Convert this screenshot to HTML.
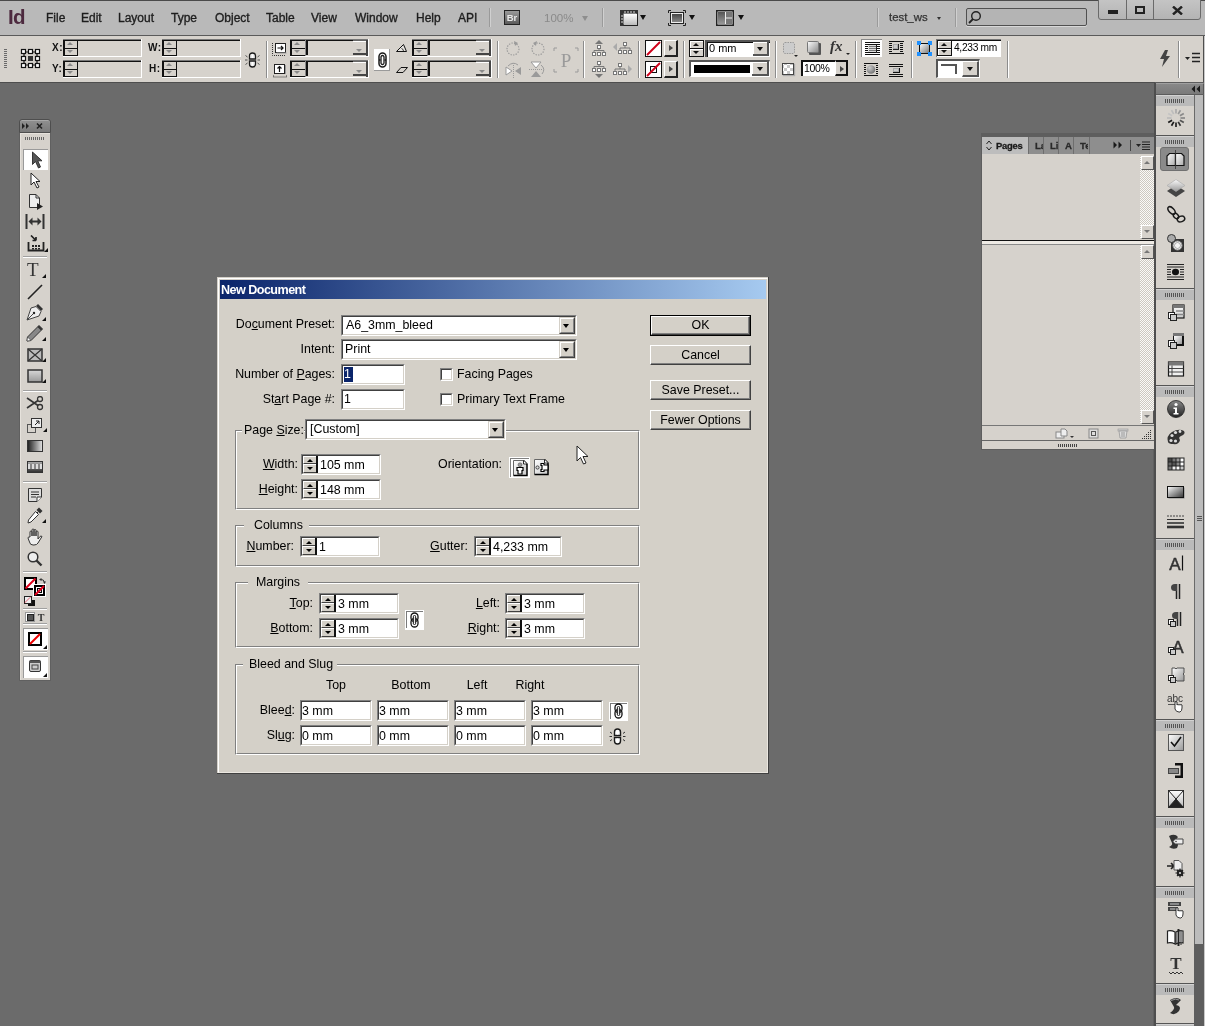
<!DOCTYPE html>
<html><head><meta charset="utf-8">
<style>
*{box-sizing:border-box;margin:0;padding:0}
html,body{width:1205px;height:1026px;overflow:hidden;background:#6b6b6b;font-family:"Liberation Sans",sans-serif;position:relative}
.a{position:absolute}
/* menu bar */
#menubar{left:0;top:0;width:1205px;height:36px;background:#b9b9b9;border-top:1px solid #4a4a4a;border-bottom:1px solid #5a5a5a}
#menubar .m{position:absolute;top:10px;font-size:12px;color:#1e1e1e;letter-spacing:0;-webkit-text-stroke:0.35px #1e1e1e}
#ctrl{left:0;top:36px;width:1204px;height:47px;background:#d6d2cc;border-bottom:1px solid #4e4e4e;border-right:1px solid #4e4e4e}
.fld{position:absolute;border-top:2px solid #111;border-left:2px solid #111;border-right:1px solid #fff;border-bottom:2px solid #fff;background:#d6d2cc}
.spin{position:absolute;border:1px solid #111;border-width:0 2px 0 0;width:15px;height:100%;left:0;top:0}
.lbl{position:absolute;font-size:10px;color:#111;font-weight:bold;letter-spacing:0.5px}
.vsep{position:absolute;width:2px;border-left:1px solid #9a9a9a;border-right:1px solid #fff}
/* toolbox */
#tools{left:20px;top:119px;width:30px;height:561px;background:#d6d2cc;border:1px solid #8a8a8a}
/* dock */
#dock{left:1155px;top:82px;width:50px;height:944px;background:#6b6b6b}
/* dialog */
#dlg{left:217px;top:277px;width:551px;height:496px;background:#d4d0c8;border-top:1px solid #d4d0c8;border-left:1px solid #d4d0c8;border-right:1px solid #404040;border-bottom:1px solid #404040}
#dlg .in{position:absolute;left:0;top:0;right:0;bottom:0;border-top:1px solid #fff;border-left:1px solid #fff;border-right:1px solid #e8e4dc;border-bottom:1px solid #e8e4dc}
#title{left:2px;top:2px;width:545px;height:19px;background:linear-gradient(to right,#0a246a,#a6caf0);color:#fff;font-weight:bold;font-size:11.8px;padding:3px 0 0 2px}
.t{position:absolute;font-size:12.4px;color:#000;white-space:nowrap}
.box{position:absolute;background:#fff;border-top:2px solid #404040;border-left:2px solid #404040;border-right:1px solid #fff;border-bottom:1px solid #fff;box-shadow:inset -1px -1px 0 #d4d0c8, -1px -1px 0 #808080;}
.btn{position:absolute;background:#d4d0c8;border-top:1px solid #fff;border-left:1px solid #fff;border-right:1px solid #404040;border-bottom:1px solid #404040;box-shadow:inset -1px -1px 0 #808080;font-size:12.4px;text-align:center;color:#000}
.grp{position:absolute;border:1px solid #808080;box-shadow:1px 1px 0 #fff inset, 1px 1px 0 #fff}
.gl{position:absolute;background:#d4d0c8;font-size:12.4px;padding:0 3px;white-space:nowrap}
.dd{position:absolute;right:0;top:0;width:17px;height:100%;background:#d4d0c8;border-top:1px solid #d4d0c8;border-left:1px solid #d4d0c8;border-right:1px solid #404040;border-bottom:1px solid #404040;box-shadow:inset 1px 1px 0 #fff, inset -1px -1px 0 #808080}
.dd:after{content:"";position:absolute;left:4px;top:6px;border-left:4px solid transparent;border-right:4px solid transparent;border-top:4px solid #000}
.sp{position:absolute;left:0;top:0;width:16px;height:100%;background:#d4d0c8;border-right:1px solid #404040}
.chk{position:absolute;width:13px;height:13px;background:#fff;border-top:1px solid #808080;border-left:1px solid #808080;border-right:1px solid #fff;border-bottom:1px solid #fff;box-shadow:inset 1px 1px 0 #404040, inset -1px -1px 0 #d4d0c8}
</style></head><body><div id="root" style="position:absolute;left:0;top:0;width:1205px;height:1026px;overflow:hidden;will-change:transform">

<div id="menubar" class="a">
  <div class="a" style="left:8px;top:4px;font-size:20.5px;font-weight:bold;color:#4d2a3f;letter-spacing:-0.6px">Id</div>
  <div class="m" style="left:46px">File</div>
  <div class="m" style="left:81px">Edit</div>
  <div class="m" style="left:118px">Layout</div>
  <div class="m" style="left:171px">Type</div>
  <div class="m" style="left:215px">Object</div>
  <div class="m" style="left:266px">Table</div>
  <div class="m" style="left:311px">View</div>
  <div class="m" style="left:355px">Window</div>
  <div class="m" style="left:416px">Help</div>
  <div class="m" style="left:458px">API</div>
</div>
<div class="a" style="left:489px;top:8px;width:2px;height:19px;background:#9a9a9a;border-right:1px solid #d0d0d0"></div>
<div class="a" style="left:504px;top:10px;width:16px;height:15px;background:linear-gradient(#9a9a9a,#5a5a5a);border:1px solid #222;font-size:9.5px;font-weight:bold;color:#e8e8e8;text-align:center;line-height:13px">Br</div>
<div class="a" style="left:544px;top:12px;font-size:11.5px;color:#8a8a8a">100%</div>
<div class="a" style="left:582px;top:16px;border-left:3.5px solid transparent;border-right:3.5px solid transparent;border-top:5px solid #8e8e8e"></div>
<div class="a" style="left:602px;top:8px;width:2px;height:19px;background:#9a9a9a;border-right:1px solid #d0d0d0"></div>
<svg class="a" style="left:620px;top:10px" width="18" height="16" viewBox="0 0 18 16"><rect x="0.75" y="0.75" width="16.5" height="14.5" fill="#d8d8d8" stroke="#222" stroke-width="1.5"/><rect x="0" y="0" width="18" height="3.5" fill="#333"/><path d="M5 1V3M8 1V3M11 1V3M14 1V3" stroke="#ddd"/><rect x="0" y="0" width="3.5" height="16" fill="#333"/><path d="M1 6H3M1 9H3M1 12H3" stroke="#ddd"/><rect x="4" y="4" width="13" height="11" fill="url(#vgr)"/><defs><linearGradient id="vgr" x1="0" y1="0" x2="0" y2="1"><stop offset="0" stop-color="#fff"/><stop offset="1" stop-color="#bbb"/></linearGradient></defs></svg>
<div class="a" style="left:640px;top:15px;border-left:3.5px solid transparent;border-right:3.5px solid transparent;border-top:5px solid #111"></div>
<svg class="a" style="left:668px;top:10px" width="18" height="16" viewBox="0 0 18 16"><path d="M0.5 3V0.5H3M15 0.5H17.5V3M17.5 13V15.5H15M3 15.5H0.5V13" fill="none" stroke="#222"/><rect x="2.5" y="2.5" width="13" height="11" fill="#eee" stroke="#222"/><rect x="4" y="4" width="10" height="8" fill="url(#sgr)"/><defs><linearGradient id="sgr" x1="0" y1="0" x2="0" y2="1"><stop offset="0" stop-color="#444"/><stop offset="1" stop-color="#888"/></linearGradient></defs></svg>
<div class="a" style="left:689px;top:15px;border-left:3.5px solid transparent;border-right:3.5px solid transparent;border-top:5px solid #111"></div>
<svg class="a" style="left:716px;top:10px" width="18" height="16" viewBox="0 0 18 16"><rect x="0.75" y="0.75" width="16.5" height="14.5" fill="#eee" stroke="#222" stroke-width="1.5"/><rect x="2" y="2" width="7" height="12" fill="url(#agr)"/><rect x="10" y="2" width="6" height="5.5" fill="#777"/><rect x="10" y="8.5" width="6" height="5.5" fill="#777"/><defs><linearGradient id="agr" x1="0" y1="0" x2="0" y2="1"><stop offset="0" stop-color="#555"/><stop offset="1" stop-color="#999"/></linearGradient></defs></svg>
<div class="a" style="left:738px;top:15px;border-left:3.5px solid transparent;border-right:3.5px solid transparent;border-top:5px solid #111"></div>
<div class="a" style="left:877px;top:8px;width:2px;height:19px;background:#9a9a9a;border-right:1px solid #d0d0d0"></div>
<div class="a" style="left:889px;top:11px;font-size:11.4px;color:#333;-webkit-text-stroke:0.25px #333">test_ws</div>
<div class="a" style="left:937px;top:17px;border-left:2.5px solid transparent;border-right:2.5px solid transparent;border-top:3px solid #333"></div>
<div class="a" style="left:955px;top:8px;width:2px;height:19px;background:#9a9a9a;border-right:1px solid #d0d0d0"></div>
<div class="a" style="left:966px;top:8px;width:121px;height:18px;background:#b4b4b4;border:1px solid #505050;border-radius:2px;box-shadow:0 1px 0 #d8d8d8"></div>
<svg class="a" style="left:968px;top:10px" width="14" height="14" viewBox="0 0 14 14"><circle cx="8" cy="6" r="4.3" fill="none" stroke="#222" stroke-width="1.4"/><path d="M5 9L1 13" stroke="#222" stroke-width="1.8"/></svg>
<div class="a" style="left:1098px;top:-1px;width:103px;height:21px;background:linear-gradient(#c4c4c4,#b4b4b4);border:1px solid #6a6a6a;border-radius:0 0 3px 3px"></div>
<div class="a" style="left:1126px;top:0px;width:1px;height:19px;background:#6a6a6a"></div>
<div class="a" style="left:1153px;top:0px;width:1px;height:19px;background:#6a6a6a"></div>
<div class="a" style="left:1108px;top:10px;width:10px;height:4px;background:#222"></div>
<div class="a" style="left:1135px;top:6px;width:10px;height:8px;border:2px solid #222;border-top-width:2px"></div>
<svg class="a" style="left:1172px;top:6px" width="11" height="9" viewBox="0 0 11 9"><path d="M1 0.5L10 8.5M10 0.5L1 8.5" stroke="#222" stroke-width="2.4"/></svg>

<div id="ctrl" class="a"></div>
<!--CTRL-->
<div class="a" style="left:4px;top:49px;width:3px;height:19px;background:repeating-linear-gradient(#6a6a6a 0 1px,transparent 1px 2px)"></div>
<svg class="a" style="left:20px;top:48px" width="21" height="21" viewBox="0 0 21 21"><g fill="#fff" stroke="#111" stroke-width="1.2"><path d="M4 4H17V17H4Z" fill="none"/><rect x="1.5" y="1.5" width="4" height="4"/><rect x="8.5" y="1.5" width="4" height="4"/><rect x="15.5" y="1.5" width="4" height="4"/><rect x="1.5" y="8.5" width="4" height="4"/><rect x="15.5" y="8.5" width="4" height="4"/><rect x="1.5" y="15.5" width="4" height="4"/><rect x="8.5" y="15.5" width="4" height="4"/><rect x="15.5" y="15.5" width="4" height="4"/></g><rect x="8" y="8" width="5" height="5" fill="#333"/></svg>
<div class="lbl" style="left:52px;top:42px">X:</div>
<div class="lbl" style="left:52px;top:63px">Y:</div>
<div class="a" style="left:63px;top:56px;width:79px;height:1px;background:#fff;"></div><div class="a" style="left:141px;top:39px;width:1px;height:18px;background:#fff;"></div><div class="a" style="left:63px;top:39px;width:78px;height:1px;background:#777;"></div><div class="a" style="left:63px;top:40px;width:15px;height:1px;background:#111;"></div><div class="a" style="left:63px;top:40px;width:2px;height:16px;background:#111;"></div><div class="a" style="left:63px;top:55px;width:15px;height:1px;background:#111;"></div><div class="a" style="left:65px;top:48px;width:13px;height:1px;background:#111;"></div><div class="a" style="left:67px;top:42px;width:0;height:0;border-left:3.5px solid transparent;border-right:3.5px solid transparent;border-bottom:3.5px solid #8a8a8a"></div><div class="a" style="left:67px;top:50px;width:0;height:0;border-left:3.5px solid transparent;border-right:3.5px solid transparent;border-top:3.5px solid #8a8a8a"></div><div class="a" style="left:77px;top:40px;width:64px;height:1px;background:#111;"></div><div class="a" style="left:77px;top:40px;width:1px;height:16px;background:#111;"></div>
<div class="a" style="left:63px;top:77px;width:79px;height:1px;background:#fff;"></div><div class="a" style="left:141px;top:60px;width:1px;height:18px;background:#fff;"></div><div class="a" style="left:63px;top:60px;width:78px;height:1px;background:#777;"></div><div class="a" style="left:63px;top:61px;width:15px;height:1px;background:#111;"></div><div class="a" style="left:63px;top:61px;width:2px;height:16px;background:#111;"></div><div class="a" style="left:63px;top:76px;width:15px;height:1px;background:#111;"></div><div class="a" style="left:65px;top:69px;width:13px;height:1px;background:#111;"></div><div class="a" style="left:67px;top:63px;width:0;height:0;border-left:3.5px solid transparent;border-right:3.5px solid transparent;border-bottom:3.5px solid #8a8a8a"></div><div class="a" style="left:67px;top:71px;width:0;height:0;border-left:3.5px solid transparent;border-right:3.5px solid transparent;border-top:3.5px solid #8a8a8a"></div><div class="a" style="left:77px;top:61px;width:64px;height:1px;background:#111;"></div><div class="a" style="left:77px;top:61px;width:1px;height:16px;background:#111;"></div>
<div class="lbl" style="left:148px;top:42px">W:</div>
<div class="lbl" style="left:149px;top:63px">H:</div>
<div class="a" style="left:162px;top:56px;width:79px;height:1px;background:#fff;"></div><div class="a" style="left:240px;top:39px;width:1px;height:18px;background:#fff;"></div><div class="a" style="left:162px;top:39px;width:78px;height:1px;background:#777;"></div><div class="a" style="left:162px;top:40px;width:15px;height:1px;background:#111;"></div><div class="a" style="left:162px;top:40px;width:2px;height:16px;background:#111;"></div><div class="a" style="left:162px;top:55px;width:15px;height:1px;background:#111;"></div><div class="a" style="left:164px;top:48px;width:13px;height:1px;background:#111;"></div><div class="a" style="left:166px;top:42px;width:0;height:0;border-left:3.5px solid transparent;border-right:3.5px solid transparent;border-bottom:3.5px solid #8a8a8a"></div><div class="a" style="left:166px;top:50px;width:0;height:0;border-left:3.5px solid transparent;border-right:3.5px solid transparent;border-top:3.5px solid #8a8a8a"></div><div class="a" style="left:176px;top:40px;width:64px;height:1px;background:#111;"></div><div class="a" style="left:176px;top:40px;width:1px;height:16px;background:#111;"></div>
<div class="a" style="left:162px;top:77px;width:79px;height:1px;background:#fff;"></div><div class="a" style="left:240px;top:60px;width:1px;height:18px;background:#fff;"></div><div class="a" style="left:162px;top:60px;width:78px;height:1px;background:#777;"></div><div class="a" style="left:162px;top:61px;width:15px;height:1px;background:#111;"></div><div class="a" style="left:162px;top:61px;width:2px;height:16px;background:#111;"></div><div class="a" style="left:162px;top:76px;width:15px;height:1px;background:#111;"></div><div class="a" style="left:164px;top:69px;width:13px;height:1px;background:#111;"></div><div class="a" style="left:166px;top:63px;width:0;height:0;border-left:3.5px solid transparent;border-right:3.5px solid transparent;border-bottom:3.5px solid #8a8a8a"></div><div class="a" style="left:166px;top:71px;width:0;height:0;border-left:3.5px solid transparent;border-right:3.5px solid transparent;border-top:3.5px solid #8a8a8a"></div><div class="a" style="left:176px;top:61px;width:64px;height:1px;background:#111;"></div><div class="a" style="left:176px;top:61px;width:1px;height:16px;background:#111;"></div>
<svg class="a" style="left:245px;top:52px" width="15" height="16" viewBox="0 0 15 16"><g fill="#eee" stroke="#1a1a1a" stroke-width="1.3"><path d="M4.5 7V3.8Q4.5 1 7.5 1Q10.5 1 10.5 3.8V7Z"/><path d="M4.5 9V12.2Q4.5 15 7.5 15Q10.5 15 10.5 12.2V9Z"/></g><path d="M7.5 2.5V6M7.5 10V13.5" stroke="#fff" stroke-width="1"/><path d="M0 8H2.5M12.5 8H15M0.5 3.5L2.5 5M14.5 3.5L12.5 5M0.5 12.5L2.5 11M14.5 12.5L12.5 11" stroke="#444" stroke-width="0.9"/></svg>
<div class="a" style="left:266px;top:41px;width:2px;height:37px;background:#8c8c8c;border-right:1px solid #fff"></div>
<svg class="a" style="left:272px;top:42px" width="15" height="14" viewBox="0 0 15 14"><path d="M0.5 1V13.5H14" fill="none" stroke="#333" stroke-dasharray="1 1"/><rect x="3.5" y="1.5" width="10" height="9" fill="#fff" stroke="#222"/><rect x="4.5" y="10.5" width="10" height="1" fill="#999"/><path d="M5.5 6H11M9 4L11 6L9 8" stroke="#111" fill="none" stroke-width="1.2"/></svg>
<svg class="a" style="left:273px;top:63px" width="14" height="15" viewBox="0 0 14 15"><rect x="1.5" y="1.5" width="10" height="9" fill="#fff" stroke="#222"/><rect x="12" y="2" width="1" height="9" fill="#999"/><path d="M6.5 9V3.5M4.5 5.5L6.5 3.5L8.5 5.5" stroke="#111" fill="none" stroke-width="1.2"/><path d="M0.5 14H13.5M0.5 12.5V14M13.5 12.5V14" stroke="#333" stroke-dasharray="1 1"/></svg>
<div class="a" style="left:290px;top:56px;width:79px;height:1px;background:#fff;"></div><div class="a" style="left:368px;top:39px;width:1px;height:18px;background:#fff;"></div><div class="a" style="left:290px;top:39px;width:78px;height:1px;background:#777;"></div><div class="a" style="left:290px;top:40px;width:15px;height:1px;background:#111;"></div><div class="a" style="left:290px;top:40px;width:2px;height:16px;background:#111;"></div><div class="a" style="left:290px;top:55px;width:15px;height:1px;background:#111;"></div><div class="a" style="left:292px;top:48px;width:13px;height:1px;background:#111;"></div><div class="a" style="left:294px;top:42px;width:0;height:0;border-left:3.5px solid transparent;border-right:3.5px solid transparent;border-bottom:3.5px solid #8a8a8a"></div><div class="a" style="left:294px;top:50px;width:0;height:0;border-left:3.5px solid transparent;border-right:3.5px solid transparent;border-top:3.5px solid #8a8a8a"></div><div class="a" style="left:305px;top:40px;width:1px;height:16px;background:#888;"></div><div class="a" style="left:306px;top:40px;width:2px;height:15px;background:#111;"></div><div class="a" style="left:306px;top:40px;width:47px;height:1px;background:#111;"></div><div class="a" style="left:353px;top:40px;width:14px;height:1px;background:#666;"></div><div class="a" style="left:353px;top:41px;width:13px;height:1px;background:#fff;"></div><div class="a" style="left:366px;top:40px;width:2px;height:16px;background:#444;"></div><div class="a" style="left:353px;top:53px;width:15px;height:2px;background:#444;"></div><div class="a" style="left:356px;top:49px;width:0;height:0;border-left:3.5px solid transparent;border-right:3.5px solid transparent;border-top:3.5px solid #8a8a8a"></div>
<div class="a" style="left:290px;top:77px;width:79px;height:1px;background:#fff;"></div><div class="a" style="left:368px;top:60px;width:1px;height:18px;background:#fff;"></div><div class="a" style="left:290px;top:60px;width:78px;height:1px;background:#777;"></div><div class="a" style="left:290px;top:61px;width:15px;height:1px;background:#111;"></div><div class="a" style="left:290px;top:61px;width:2px;height:16px;background:#111;"></div><div class="a" style="left:290px;top:76px;width:15px;height:1px;background:#111;"></div><div class="a" style="left:292px;top:69px;width:13px;height:1px;background:#111;"></div><div class="a" style="left:294px;top:63px;width:0;height:0;border-left:3.5px solid transparent;border-right:3.5px solid transparent;border-bottom:3.5px solid #8a8a8a"></div><div class="a" style="left:294px;top:71px;width:0;height:0;border-left:3.5px solid transparent;border-right:3.5px solid transparent;border-top:3.5px solid #8a8a8a"></div><div class="a" style="left:305px;top:61px;width:1px;height:16px;background:#888;"></div><div class="a" style="left:306px;top:61px;width:2px;height:15px;background:#111;"></div><div class="a" style="left:306px;top:61px;width:47px;height:1px;background:#111;"></div><div class="a" style="left:353px;top:61px;width:14px;height:1px;background:#666;"></div><div class="a" style="left:353px;top:62px;width:13px;height:1px;background:#fff;"></div><div class="a" style="left:366px;top:61px;width:2px;height:16px;background:#444;"></div><div class="a" style="left:353px;top:74px;width:15px;height:2px;background:#444;"></div><div class="a" style="left:356px;top:70px;width:0;height:0;border-left:3.5px solid transparent;border-right:3.5px solid transparent;border-top:3.5px solid #8a8a8a"></div>
<div class="a" style="left:374px;top:49px;width:16px;height:22px;background:#fff;border-right:1px solid #9a9a9a;border-bottom:1px solid #9a9a9a"></div>
<svg class="a" style="left:378px;top:52px" width="9" height="16" viewBox="0 0 9 16"><rect x="1" y="1" width="7" height="14" rx="3.5" fill="#fff" stroke="#1a1a1a" stroke-width="1.5"/><rect x="3" y="3.5" width="3" height="9" rx="1.5" fill="#fff" stroke="#1a1a1a" stroke-width="1.3"/><path d="M4.5 5V11" stroke="#fff" stroke-width="0.9"/><path d="M1 8H2.5M6.5 8H8" stroke="#1a1a1a" stroke-width="1.6"/></svg>
<svg class="a" style="left:396px;top:44px" width="11" height="8" viewBox="0 0 11 8"><path d="M0.5 7.5H10.5L7.5 0.5Z" fill="#fff" fill-opacity="0.4" stroke="#111" stroke-width="1"/><path d="M5.5 4.5Q7 4.5 7.5 7" fill="none" stroke="#111" stroke-width="0.8"/></svg>
<svg class="a" style="left:396px;top:67px" width="12" height="6" viewBox="0 0 12 6"><path d="M0.5 5.5H7L11.5 0.5H5Z" fill="none" stroke="#111" stroke-width="1"/></svg>
<div class="a" style="left:412px;top:56px;width:80px;height:1px;background:#fff;"></div><div class="a" style="left:491px;top:39px;width:1px;height:18px;background:#fff;"></div><div class="a" style="left:412px;top:39px;width:79px;height:1px;background:#777;"></div><div class="a" style="left:412px;top:40px;width:15px;height:1px;background:#111;"></div><div class="a" style="left:412px;top:40px;width:2px;height:16px;background:#111;"></div><div class="a" style="left:412px;top:55px;width:15px;height:1px;background:#111;"></div><div class="a" style="left:414px;top:48px;width:13px;height:1px;background:#111;"></div><div class="a" style="left:416px;top:42px;width:0;height:0;border-left:3.5px solid transparent;border-right:3.5px solid transparent;border-bottom:3.5px solid #8a8a8a"></div><div class="a" style="left:416px;top:50px;width:0;height:0;border-left:3.5px solid transparent;border-right:3.5px solid transparent;border-top:3.5px solid #8a8a8a"></div><div class="a" style="left:427px;top:40px;width:1px;height:16px;background:#888;"></div><div class="a" style="left:428px;top:40px;width:2px;height:15px;background:#111;"></div><div class="a" style="left:428px;top:40px;width:48px;height:1px;background:#111;"></div><div class="a" style="left:476px;top:40px;width:14px;height:1px;background:#666;"></div><div class="a" style="left:476px;top:41px;width:13px;height:1px;background:#fff;"></div><div class="a" style="left:489px;top:40px;width:2px;height:16px;background:#444;"></div><div class="a" style="left:476px;top:53px;width:15px;height:2px;background:#444;"></div><div class="a" style="left:479px;top:49px;width:0;height:0;border-left:3.5px solid transparent;border-right:3.5px solid transparent;border-top:3.5px solid #8a8a8a"></div>
<div class="a" style="left:412px;top:77px;width:80px;height:1px;background:#fff;"></div><div class="a" style="left:491px;top:60px;width:1px;height:18px;background:#fff;"></div><div class="a" style="left:412px;top:60px;width:79px;height:1px;background:#777;"></div><div class="a" style="left:412px;top:61px;width:15px;height:1px;background:#111;"></div><div class="a" style="left:412px;top:61px;width:2px;height:16px;background:#111;"></div><div class="a" style="left:412px;top:76px;width:15px;height:1px;background:#111;"></div><div class="a" style="left:414px;top:69px;width:13px;height:1px;background:#111;"></div><div class="a" style="left:416px;top:63px;width:0;height:0;border-left:3.5px solid transparent;border-right:3.5px solid transparent;border-bottom:3.5px solid #8a8a8a"></div><div class="a" style="left:416px;top:71px;width:0;height:0;border-left:3.5px solid transparent;border-right:3.5px solid transparent;border-top:3.5px solid #8a8a8a"></div><div class="a" style="left:427px;top:61px;width:1px;height:16px;background:#888;"></div><div class="a" style="left:428px;top:61px;width:2px;height:15px;background:#111;"></div><div class="a" style="left:428px;top:61px;width:48px;height:1px;background:#111;"></div><div class="a" style="left:476px;top:61px;width:14px;height:1px;background:#666;"></div><div class="a" style="left:476px;top:62px;width:13px;height:1px;background:#fff;"></div><div class="a" style="left:489px;top:61px;width:2px;height:16px;background:#444;"></div><div class="a" style="left:476px;top:74px;width:15px;height:2px;background:#444;"></div><div class="a" style="left:479px;top:70px;width:0;height:0;border-left:3.5px solid transparent;border-right:3.5px solid transparent;border-top:3.5px solid #8a8a8a"></div>
<div class="a" style="left:497px;top:41px;width:2px;height:37px;background:#8c8c8c;border-right:1px solid #fff"></div>
<svg class="a" style="left:505px;top:40px" width="16" height="16" viewBox="0 0 16 16"><circle cx="8" cy="9" r="6" fill="none" stroke="#9a9a9a" stroke-width="1.2" stroke-dasharray="1.3 1.3"/><path d="M9 1L13 3L10 6Z" fill="#9a9a9a"/></svg>
<svg class="a" style="left:530px;top:40px" width="16" height="16" viewBox="0 0 16 16"><circle cx="8" cy="9" r="6" fill="none" stroke="#9a9a9a" stroke-width="1.2" stroke-dasharray="1.3 1.3"/><path d="M7 1L3 3L6 6Z" fill="#9a9a9a"/></svg>
<svg class="a" style="left:505px;top:61px" width="17" height="17" viewBox="0 0 17 17"><path d="M1 6L7 10L1 14Z" fill="#fff" stroke="#9a9a9a"/><path d="M16 6L10 10L16 14Z" fill="#9a9a9a"/><path d="M8.5 4V17" stroke="#9a9a9a" stroke-dasharray="1 1"/><path d="M3 5Q8 0 13 4" fill="none" stroke="#9a9a9a"/></svg>
<svg class="a" style="left:529px;top:61px" width="17" height="17" viewBox="0 0 17 17"><path d="M2 1H12L7 7Z" fill="#fff" stroke="#9a9a9a"/><path d="M2 16H12L7 10Z" fill="#9a9a9a"/><path d="M0 8.5H13" stroke="#9a9a9a" stroke-dasharray="1 1"/><path d="M12 4Q17 8 13 13" fill="none" stroke="#9a9a9a"/></svg>
<svg class="a" style="left:553px;top:47px" width="26" height="26" viewBox="0 0 26 26"><path d="M1 4V1H4M22 1H25V4M25 22V25H22M4 25H1V22" fill="none" stroke="#9a9a9a"/><text x="13" y="20" text-anchor="middle" font-family="Liberation Serif" font-size="19" fill="#9a9a9a">P</text></svg>
<div class="a" style="left:583px;top:41px;width:2px;height:37px;background:#8c8c8c;border-right:1px solid #fff"></div>
<svg class="a" style="left:592px;top:40px" width="14" height="16" viewBox="0 0 14 16"><path d="M7 0L11 4H3Z" fill="#777"/><g fill="#fff" stroke="#777"><rect x="5.5" y="5.5" width="3" height="3"/><rect x="0.5" y="12.5" width="3" height="3"/><rect x="5.5" y="12.5" width="3" height="3"/><rect x="10.5" y="12.5" width="3" height="3"/><path d="M7 8.5V10.5M2 10.5H12M2 10.5V12.5M12 10.5V12.5" fill="none"/></g></svg>
<svg class="a" style="left:613px;top:42px" width="19" height="13" viewBox="0 0 19 13"><path d="M0 5L4 1V9Z" fill="#aaa"/><g fill="#fff" stroke="#777"><rect x="10.5" y="0.5" width="3" height="3"/><rect x="5.5" y="8.5" width="3" height="3"/><rect x="10.5" y="8.5" width="3" height="3"/><rect x="15.5" y="8.5" width="3" height="3"/><path d="M12 3.5V6M7 6H17M7 6V8.5M17 6V8.5" fill="none"/></g></svg>
<svg class="a" style="left:592px;top:61px" width="14" height="17" viewBox="0 0 14 17"><g fill="#fff" stroke="#777"><rect x="5.5" y="0.5" width="3" height="3"/><rect x="0.5" y="7.5" width="3" height="3"/><rect x="5.5" y="7.5" width="3" height="3"/><rect x="10.5" y="7.5" width="3" height="3"/><path d="M7 3.5V5.5M2 5.5H12M2 5.5V7.5M12 5.5V7.5" fill="none"/></g><path d="M7 17L11 13H3Z" fill="#777"/></svg>
<svg class="a" style="left:613px;top:63px" width="19" height="13" viewBox="0 0 19 13"><g fill="#fff" stroke="#777"><rect x="5.5" y="0.5" width="3" height="3"/><rect x="0.5" y="8.5" width="3" height="3"/><rect x="5.5" y="8.5" width="3" height="3"/><rect x="10.5" y="8.5" width="3" height="3"/><path d="M7 3.5V6M2 6H12M2 6V8.5M12 6V8.5" fill="none"/></g><path d="M19 6L15 2V10Z" fill="#aaa"/></svg>
<div class="a" style="left:638px;top:41px;width:2px;height:37px;background:#8c8c8c;border-right:1px solid #fff"></div>
<div class="a" style="left:645px;top:40px;width:17px;height:17px;background:#fff;border:1.5px solid #111"></div>
<svg class="a" style="left:645px;top:40px" width="17" height="17"><path d="M2 15L15 2" stroke="#d0021b" stroke-width="2"/></svg>
<div class="a" style="left:645px;top:61px;width:17px;height:17px;background:#fff;border:1.5px solid #111"></div>
<svg class="a" style="left:645px;top:61px" width="17" height="17"><rect x="5.5" y="5.5" width="6" height="6" fill="none" stroke="#111"/><path d="M2 15L15 2" stroke="#d0021b" stroke-width="2"/></svg>
<div class="a" style="left:664px;top:40px;width:14px;height:17px;background:#d6d2cc;border-top:1px solid #fff;border-left:1px solid #fff;border-right:2px solid #222;border-bottom:2px solid #222"></div>
<div class="a" style="left:669px;top:45px;border-top:3.5px solid transparent;border-bottom:3.5px solid transparent;border-left:4px solid #444"></div>
<div class="a" style="left:664px;top:61px;width:14px;height:17px;background:#d6d2cc;border-top:1px solid #fff;border-left:1px solid #fff;border-right:2px solid #222;border-bottom:2px solid #222"></div>
<div class="a" style="left:669px;top:66px;border-top:3.5px solid transparent;border-bottom:3.5px solid transparent;border-left:4px solid #444"></div>
<div class="a" style="left:683px;top:41px;width:2px;height:37px;background:#8c8c8c;border-right:1px solid #fff"></div>
<div class="a" style="left:689px;top:40px;width:15px;height:17px;background:#111;"></div><div class="a" style="left:690px;top:41px;width:13px;height:7px;background:#d6d2cc;box-shadow:inset 1px 1px 0 #fff"></div><div class="a" style="left:690px;top:49px;width:13px;height:7px;background:#d6d2cc;box-shadow:inset 1px 1px 0 #fff"></div><div class="a" style="left:693px;top:42.5px;width:0;height:0;border-left:3.5px solid transparent;border-right:3.5px solid transparent;border-bottom:3.5px solid #111"></div><div class="a" style="left:693px;top:51px;width:0;height:0;border-left:3.5px solid transparent;border-right:3.5px solid transparent;border-top:3.5px solid #111"></div>
<div class="a" style="left:705px;top:40px;width:65px;height:17px;background:#fff;border-top:2px solid #555;border-left:2px solid #555;box-shadow:inset 1px 1px 0 #111"></div>
<div class="a" style="left:709px;top:42px;font-size:11px;color:#000">0 mm</div>
<div class="a" style="left:753px;top:42px;width:16px;height:14px;background:#d6d2cc;border-right:2px solid #555;border-bottom:2px solid #555;box-shadow:inset 1px 1px 0 #fff"></div><div class="a" style="left:756.5px;top:47px;width:0;height:0;border-left:3.5px solid transparent;border-right:3.5px solid transparent;border-top:4px solid #111"></div>
<div class="a" style="left:689px;top:60px;width:81px;height:17px;background:#fff;border-top:2px solid #555;border-left:2px solid #555;border-right:1px solid #fff;border-bottom:1px solid #fff"></div>
<div class="a" style="left:694px;top:65px;width:56px;height:8px;background:#000;"></div>
<div class="a" style="left:752px;top:62px;width:17px;height:14px;background:#d6d2cc;border-right:2px solid #555;border-bottom:2px solid #555;box-shadow:inset 1px 1px 0 #fff"></div><div class="a" style="left:756.5px;top:67px;width:0;height:0;border-left:3.5px solid transparent;border-right:3.5px solid transparent;border-top:4px solid #111"></div>
<div class="a" style="left:775px;top:41px;width:2px;height:37px;background:#8c8c8c;border-right:1px solid #fff"></div>
<svg class="a" style="left:782px;top:41px" width="16" height="16" viewBox="0 0 16 16"><rect x="1.5" y="1.5" width="11" height="11" rx="1.5" fill="#ccc" stroke="#999" stroke-dasharray="1.5 1"/><path d="M12 14L16 14L14 16Z" fill="#222"/></svg>
<svg class="a" style="left:807px;top:41px" width="15" height="15" viewBox="0 0 15 15"><defs><linearGradient id="gsh" x1="0" y1="0" x2="1" y2="1"><stop offset="0" stop-color="#fff"/><stop offset="1" stop-color="#888"/></linearGradient></defs><rect x="2" y="2" width="12" height="12" rx="1" fill="#555"/><rect x="0.5" y="0.5" width="11" height="11" rx="1" fill="url(#gsh)" stroke="#777"/></svg>
<div class="a" style="left:830px;top:38px;font-family:'Liberation Serif';font-style:italic;font-weight:bold;font-size:15px;color:#333">fx</div><div class="a" style="left:846px;top:53px;border-left:2px solid transparent;border-right:2px solid transparent;border-top:2px solid #222"></div>
<div class="a" style="left:782px;top:63px;width:12px;height:12px;border:1px solid #444;background:repeating-conic-gradient(#c8c8c8 0 25%,#fff 0 50%) 1px 1px/6px 6px;box-shadow:1px 1px 1px #aaa"></div>
<div class="a" style="left:801px;top:60px;width:47px;height:16px;background:#fff;border-top:2px solid #111;border-left:2px solid #111"></div>
<div class="a" style="left:804px;top:62px;font-size:10.5px;letter-spacing:-0.3px;color:#000">100%</div>
<div class="a" style="left:835px;top:60px;width:13px;height:16px;background:#d6d2cc;border-top:2px solid #111;border-right:2px solid #111;border-bottom:2px solid #111;border-left:1px solid #fff"><div class="a" style="left:4px;top:4px;border-top:3.5px solid transparent;border-bottom:3.5px solid transparent;border-left:4px solid #444"></div></div>
<div class="a" style="left:855px;top:41px;width:2px;height:37px;background:#8c8c8c;border-right:1px solid #fff"></div>
<div class="a" style="left:861px;top:39px;width:21px;height:18px;background:#fff;border-top:1px solid #8a8a8a;border-left:1px solid #8a8a8a"></div><svg class="a" style="left:865px;top:42px" width="15" height="13" shape-rendering="crispEdges"><rect x="0" y="0" width="15" height="1" fill="#111"/><rect x="0" y="2" width="15" height="1" fill="#111"/><rect x="0" y="4" width="15" height="1" fill="#111"/><rect x="0" y="6" width="15" height="1" fill="#111"/><rect x="0" y="8" width="15" height="1" fill="#111"/><rect x="0" y="10" width="15" height="1" fill="#111"/><rect x="0" y="12" width="15" height="1" fill="#111"/><rect x="3" y="3" width="9" height="7" fill="#ddd"/><rect x="4" y="2" width="7" height="1" fill="#111"/><rect x="4" y="4" width="7" height="1" fill="#777"/><rect x="4" y="6" width="7" height="1" fill="#777"/><rect x="4" y="8" width="7" height="1" fill="#777"/><rect x="11" y="3" width="1" height="8" fill="#222"/></svg>

<svg class="a" style="left:889px;top:41px" width="15" height="13" shape-rendering="crispEdges"><rect x="0" y="0" width="15" height="1" fill="#111"/><rect x="0" y="12" width="15" height="1" fill="#111"/><rect x="0" y="2" width="3" height="1" fill="#111"/><rect x="11" y="2" width="3" height="1" fill="#111"/><rect x="0" y="4" width="3" height="1" fill="#111"/><rect x="11" y="4" width="3" height="1" fill="#111"/><rect x="0" y="6" width="3" height="1" fill="#111"/><rect x="11" y="6" width="3" height="1" fill="#111"/><rect x="0" y="8" width="3" height="1" fill="#111"/><rect x="11" y="8" width="3" height="1" fill="#111"/><rect x="0" y="10" width="3" height="1" fill="#111"/><rect x="11" y="10" width="3" height="1" fill="#111"/><rect x="4" y="3" width="6" height="6" fill="#222"/><rect x="4" y="3" width="5" height="5" fill="#aaa"/><rect x="5" y="4" width="3" height="3" fill="#ccc"/></svg>
<svg class="a" style="left:864px;top:63px" width="15" height="13"><g shape-rendering="crispEdges"><rect x="0" y="0" width="14" height="1" fill="#111"/><rect x="0" y="12" width="14" height="1" fill="#111"/><rect x="0" y="2" width="2" height="1" fill="#111"/><rect x="12" y="2" width="2" height="1" fill="#111"/><rect x="0" y="4" width="2" height="1" fill="#111"/><rect x="12" y="4" width="2" height="1" fill="#111"/><rect x="0" y="6" width="2" height="1" fill="#111"/><rect x="12" y="6" width="2" height="1" fill="#111"/><rect x="0" y="8" width="2" height="1" fill="#111"/><rect x="12" y="8" width="2" height="1" fill="#111"/><rect x="0" y="10" width="2" height="1" fill="#111"/><rect x="12" y="10" width="2" height="1" fill="#111"/></g><defs><radialGradient id="wrb" cx="0.35" cy="0.3" r="0.7"><stop offset="0" stop-color="#ccc"/><stop offset="1" stop-color="#777"/></radialGradient></defs><circle cx="7" cy="6.5" r="4.3" fill="url(#wrb)"/></svg>
<svg class="a" style="left:889px;top:64px" width="15" height="13" shape-rendering="crispEdges"><rect x="0" y="0" width="14" height="1" fill="#111"/><rect x="0" y="2" width="14" height="1" fill="#111"/><rect x="0" y="10" width="14" height="1" fill="#111"/><rect x="0" y="12" width="14" height="1" fill="#111"/><rect x="4" y="4" width="7" height="5" fill="#111"/><rect x="4" y="4" width="6" height="4" fill="#aaa"/><rect x="5" y="5" width="4" height="2" fill="#ccc"/></svg>
<div class="a" style="left:911px;top:41px;width:2px;height:37px;background:#8c8c8c;border-right:1px solid #fff"></div>
<svg class="a" style="left:917px;top:41px" width="15" height="15"><defs><linearGradient id="gfr2" x1="0" y1="0" x2="1" y2="1"><stop offset="0" stop-color="#fff"/><stop offset="1" stop-color="#777"/></linearGradient></defs><rect x="2.5" y="2.5" width="10" height="10" fill="url(#gfr2)" stroke="#111"/><g fill="#1e90ff" shape-rendering="crispEdges"><rect x="0" y="0" width="4" height="4"/><rect x="11" y="0" width="4" height="4"/><rect x="0" y="11" width="4" height="4"/><rect x="11" y="11" width="4" height="4"/></g></svg>
<div class="a" style="left:936px;top:39px;width:65px;height:18px;background:#fff;"></div><div class="a" style="left:936px;top:39px;width:65px;height:1px;background:#777;"></div><div class="a" style="left:936px;top:40px;width:65px;height:1px;background:#111;"></div><div class="a" style="left:936px;top:40px;width:1px;height:17px;background:#777;"></div><div class="a" style="left:937px;top:40px;width:15px;height:16px;background:#111;"></div><div class="a" style="left:938px;top:41px;width:13px;height:7px;background:#d6d2cc;box-shadow:inset 1px 1px 0 #fff"></div><div class="a" style="left:938px;top:49px;width:13px;height:6px;background:#d6d2cc;box-shadow:inset 1px 1px 0 #fff"></div><div class="a" style="left:941px;top:43px;width:0;height:0;border-left:3.5px solid transparent;border-right:3.5px solid transparent;border-bottom:3.5px solid #111"></div><div class="a" style="left:941px;top:50px;width:0;height:0;border-left:3.5px solid transparent;border-right:3.5px solid transparent;border-top:3.5px solid #111"></div><div class="a" style="left:954px;top:42px;font-size:10.2px;letter-spacing:-0.3px;color:#000">4,233 mm</div>


<div class="a" style="left:936px;top:59px;width:44px;height:19px;background:#fff;border-top:2px solid #555;border-left:2px solid #555;border-right:1px solid #fff;border-bottom:1px solid #fff"></div>
<svg class="a" style="left:941px;top:64px" width="18" height="12" shape-rendering="crispEdges"><path d="M0 1H15V10" fill="none" stroke="#555" stroke-width="2"/></svg>
<div class="a" style="left:962px;top:61px;width:17px;height:16px;background:#d6d2cc;border-top:1px solid #fff;border-left:1px solid #fff;border-right:2px solid #555;border-bottom:2px solid #555"><div class="a" style="left:4px;top:5px;border-left:3.5px solid transparent;border-right:3.5px solid transparent;border-top:4px solid #111"></div></div>
<div class="a" style="left:1007px;top:41px;width:2px;height:37px;background:#8c8c8c;border-right:1px solid #fff"></div>
<svg class="a" style="left:1159px;top:50px" width="12" height="17" viewBox="0 0 12 17"><path d="M6 0L1 9H5L3 17L11 6H7L9 0Z" fill="#444"/></svg>
<div class="a" style="left:1178px;top:41px;width:2px;height:37px;background:#8c8c8c;border-right:1px solid #fff"></div>
<svg class="a" style="left:1185px;top:52px" width="15" height="12" viewBox="0 0 15 12"><path d="M0 5H5L2.5 8Z" fill="#222"/><path d="M7 1.5H15M7 5.5H15M7 9.5H15" stroke="#222" stroke-width="1.5"/></svg>


<!--/CTRL-->
<!--TOOLS-->
<div class="a" style="left:19px;top:119px;width:32px;height:14px;background:linear-gradient(#909090,#7a7a7a);border-radius:3px 3px 0 0;border:1px solid #4e4e4e;box-shadow:inset 0 1px 0 #a8a8a8"></div>
<svg class="a" style="left:21px;top:122px" width="24" height="8" viewBox="0 0 24 8"><path d="M1 1L4 4L1 7ZM5 1L8 4L5 7Z" fill="#222"/><path d="M16 1.5L21 6.5M21 1.5L16 6.5" stroke="#222" stroke-width="1.6"/></svg>
<div class="a" style="left:19px;top:133px;width:32px;height:548px;background:#d6d2cc;border-left:1px solid #606060;border-right:1px solid #606060;border-bottom:1px solid #606060;box-shadow:inset 1px 1px 0 #e6e2dc"></div>
<div class="a" style="left:25px;top:137px;width:20px;height:3px;background:repeating-linear-gradient(90deg,#666 0 1px,transparent 1px 2px)"></div>
<div class="a" style="left:23px;top:149px;width:25px;height:21px;background:#fff;border-top:1px solid #9a9a9a;border-left:1px solid #9a9a9a"></div>
<svg class="a" style="left:31px;top:151px" width="12" height="18" viewBox="0 0 12 18"><path d="M1.5 1V13.5L4.5 10.5L7.5 17L9.5 16L6.8 9.8H11Z" fill="#555" stroke="#2a2a2a" stroke-width="0.9" stroke-linejoin="round"/></svg>
<svg class="a" style="left:29px;top:172px" width="14" height="17" viewBox="0 0 14 17"><path d="M2 1V13L5 10L8 16L10 15L7 9.5H11Z" fill="#fff" stroke="#222" stroke-width="1"/></svg>
<svg class="a" style="left:28px;top:193px" width="16" height="17" viewBox="0 0 16 17"><path d="M1.5 1.5H8L11.5 5V14.5H1.5Z" fill="#eee" stroke="#333"/><path d="M8 1.5V5H11.5" fill="none" stroke="#333"/><path d="M9 10L15 13.5L9 17Z" fill="#222"/></svg>
<svg class="a" style="left:25px;top:214px" width="20" height="15" viewBox="0 0 20 15"><path d="M1.5 0V15M18.5 0V15" stroke="#333" stroke-width="2"/><path d="M6 7.5H14" stroke="#333" stroke-width="2"/><path d="M3.5 7.5L7.5 3.5V11.5ZM16.5 7.5L12.5 3.5V11.5Z" fill="#333"/></svg>
<svg class="a" style="left:27px;top:235px" width="18" height="17" viewBox="0 0 18 17"><path d="M1.5 7V15.5H16.5V7" fill="none" stroke="#222" stroke-width="1.8"/><g fill="#222"><rect x="5" y="10" width="2" height="2"/><rect x="8" y="10" width="2" height="2"/><rect x="11" y="10" width="2" height="2"/><rect x="5" y="13" width="2" height="1.5"/><rect x="8" y="13" width="2" height="1.5"/><rect x="11" y="13" width="2" height="1.5"/></g><path d="M4 0.5L9 5.5M9 5.5V2M9 5.5H5.5" stroke="#222" stroke-width="1.7" fill="none"/></svg>
<div class="a" style="left:44px;top:248px;width:0;height:0;border-left:4px solid transparent;border-bottom:4px solid #111"></div>
<div class="a" style="left:23px;top:256px;width:24px;height:2px;border-top:1px solid #a0a0a0;background:#fff;height:2px"></div>
<div class="a" style="left:27px;top:259px;font-family:'Liberation Serif';font-size:19px;color:#333;line-height:22px">T</div>
<div class="a" style="left:42px;top:274px;width:0;height:0;border-left:4px solid transparent;border-bottom:4px solid #111"></div>
<svg class="a" style="left:27px;top:284px" width="16" height="16"><path d="M1 15L15 1" stroke="#222" stroke-width="1.6"/></svg>
<svg class="a" style="left:26px;top:303px" width="19" height="19" viewBox="0 0 19 19"><path d="M12 1L17 6L15 8L10 3Z" fill="#333"/><path d="M10 3.5L15 8.5L13 13L1 17L5 5Z" fill="#eee" stroke="#444" stroke-width="1"/><path d="M1 17L7 11" stroke="#444"/><circle cx="8" cy="10" r="1.2" fill="#222"/></svg>
<div class="a" style="left:42px;top:317px;width:0;height:0;border-left:4px solid transparent;border-bottom:4px solid #111"></div>
<svg class="a" style="left:26px;top:324px" width="18" height="18" viewBox="0 0 18 18"><path d="M13 1.5L16.5 5L5 16.5L1 17L1.5 13Z" fill="#888" stroke="#333"/><path d="M13 1.5L16.5 5L15 6.5L11.5 3Z" fill="#333"/><path d="M1.5 13L5 16.5L1 17Z" fill="#fff" stroke="#333" stroke-width="0.6"/></svg>
<div class="a" style="left:42px;top:337px;width:0;height:0;border-left:4px solid transparent;border-bottom:4px solid #111"></div>
<svg class="a" style="left:27px;top:348px" width="16" height="14" viewBox="0 0 16 14"><rect x="1" y="1" width="14" height="12" fill="#bbb" stroke="#333" stroke-width="1.5"/><path d="M1 1L15 13M15 1L1 13" stroke="#333" stroke-width="1.2"/></svg>
<div class="a" style="left:42px;top:358px;width:0;height:0;border-left:4px solid transparent;border-bottom:4px solid #111"></div>
<svg class="a" style="left:27px;top:369px" width="16" height="14" viewBox="0 0 16 14"><defs><linearGradient id="grt" x1="0" y1="0" x2="0" y2="1"><stop offset="0" stop-color="#d8d8d8"/><stop offset="1" stop-color="#999"/></linearGradient></defs><rect x="1" y="1" width="14" height="12" fill="url(#grt)" stroke="#333" stroke-width="1.5"/></svg>
<div class="a" style="left:42px;top:379px;width:0;height:0;border-left:4px solid transparent;border-bottom:4px solid #111"></div>
<div class="a" style="left:23px;top:390px;width:24px;height:2px;border-top:1px solid #a0a0a0;background:#fff;height:2px"></div>
<svg class="a" style="left:26px;top:396px" width="18" height="15" viewBox="0 0 18 15"><circle cx="14" cy="3" r="2.5" fill="none" stroke="#333" stroke-width="1.3"/><circle cx="14" cy="11" r="2.5" fill="none" stroke="#333" stroke-width="1.3"/><path d="M1 2L12 9.5M1 12L12 4.5" stroke="#333" stroke-width="1.6"/></svg>
<svg class="a" style="left:26px;top:417px" width="17" height="16" viewBox="0 0 17 16"><rect x="1.5" y="7.5" width="8" height="8" fill="none" stroke="#555"/><rect x="5.5" y="1.5" width="10" height="9" fill="#eee" stroke="#333"/><path d="M9 8L13 4M10 4H13V7" stroke="#222" fill="none"/></svg>
<div class="a" style="left:43px;top:428px;width:0;height:0;border-left:4px solid transparent;border-bottom:4px solid #111"></div>
<div class="a" style="left:27px;top:440px;width:16px;height:12px;background:linear-gradient(90deg,#222,#ddd);border:1px solid #333"></div>
<div class="a" style="left:27px;top:461px;width:16px;height:12px;background:linear-gradient(#aaa,#333);border:1px solid #333"><div style="position:absolute;left:0;top:2px;width:14px;height:5px;background:repeating-linear-gradient(90deg,#ddd 0 2px,#888 2px 4px)"></div></div>
<div class="a" style="left:23px;top:481px;width:24px;height:2px;border-top:1px solid #a0a0a0;background:#fff;height:2px"></div>
<svg class="a" style="left:27px;top:487px" width="16" height="16" viewBox="0 0 16 16"><path d="M1.5 1.5H14.5V10L10 14.5H1.5Z" fill="#ddd" stroke="#333"/><path d="M10 14.5V10H14.5" fill="#fff" stroke="#333"/><path d="M4 5H12M4 7.5H12M4 10H9" stroke="#333"/></svg>
<svg class="a" style="left:27px;top:507px" width="16" height="17" viewBox="0 0 16 17"><path d="M12 0.5L15.5 4L13 6.5L9.5 3Z" fill="#333"/><path d="M10 5L11 6M8.5 4.5L11.5 7.5L4 15L1 16L1.5 13Z" fill="#fff" stroke="#333"/></svg>
<div class="a" style="left:42px;top:519px;width:0;height:0;border-left:4px solid transparent;border-bottom:4px solid #111"></div>
<svg class="a" style="left:26px;top:528px" width="18" height="18" viewBox="0 0 18 18"><path d="M4 9V4Q4 3 5 3Q6 3 6 4V8V2Q6 1 7 1Q8 1 8 2V8V2.5Q8 1.5 9 1.5Q10 1.5 10 2.5V8V4Q10 3 11 3Q12 3 12 4V11L14 8.5Q15 7.5 16 8.5L12 15Q11 17 8 17H7Q4 17 3.5 14L2 10Q2 9 3 9Z" fill="#eee" stroke="#333"/></svg>
<svg class="a" style="left:27px;top:551px" width="16" height="16" viewBox="0 0 16 16"><circle cx="6" cy="6" r="4.8" fill="#eee" stroke="#333" stroke-width="1.5"/><path d="M9.5 9.5L14.5 14.5" stroke="#333" stroke-width="2.4"/></svg>
<div class="a" style="left:23px;top:571px;width:24px;height:2px;border-top:1px solid #a0a0a0;background:#fff;height:2px"></div>
<svg class="a" style="left:23px;top:576px" width="24" height="32" viewBox="0 0 24 32"><g shape-rendering="crispEdges"><rect x="1" y="1" width="13" height="13" fill="#000"/><rect x="3" y="3" width="9" height="9" fill="#fff"/></g><path d="M2.5 12.5L12.5 2.5" stroke="#e0001b" stroke-width="2"/><g shape-rendering="crispEdges"><rect x="10" y="8" width="13" height="13" fill="#fff"/><rect x="11" y="9" width="11" height="11" fill="#000"/><rect x="13" y="11" width="7" height="7" fill="#fff"/><rect x="14" y="12" width="5" height="5" fill="#000"/><rect x="15" y="13" width="3" height="3" fill="#ddd"/></g><path d="M12 19L21 10" stroke="#e0001b" stroke-width="2"/><path d="M17.5 3.5Q21 3 21.5 6.5" fill="none" stroke="#333" stroke-width="1"/><path d="M16 3.5L18.5 2V5ZM21.5 8L20 5.5H23Z" fill="#333"/><g shape-rendering="crispEdges"><rect x="5" y="24" width="7" height="6" fill="#111"/><rect x="1" y="20" width="8" height="8" fill="#222"/><rect x="2" y="21" width="6" height="6" fill="#eee"/></g><path d="M2 26.5L7.5 21" stroke="#e0001b" stroke-width="1" stroke-dasharray="1 0.5"/></svg>
<div class="a" style="left:23px;top:608px;width:24px;height:2px;border-top:1px solid #a0a0a0;background:#fff;height:2px"></div>
<svg class="a" style="left:25px;top:612px" width="22" height="10" viewBox="0 0 22 10"><rect x="0.5" y="0.5" width="9" height="9" fill="#fff" stroke="#999"/><rect x="2.5" y="2.5" width="6" height="6" fill="#555" stroke="#222"/><text x="16" y="9" text-anchor="middle" font-family="Liberation Serif" font-weight="bold" font-size="10" fill="#333">T</text></svg>
<div class="a" style="left:23px;top:623px;width:24px;height:2px;border-top:1px solid #a0a0a0;background:#fff;height:2px"></div>
<div class="a" style="left:23px;top:628px;width:25px;height:22px;background:#fff;border-top:1px solid #9a9a9a;border-left:1px solid #9a9a9a"></div>
<svg class="a" style="left:28px;top:632px" width="14" height="14"><rect x="1" y="1" width="12" height="12" fill="#fff" stroke="#000" stroke-width="2"/><path d="M2 12L12 2" stroke="#e00" stroke-width="2"/></svg>
<div class="a" style="left:43px;top:645px;width:0;height:0;border-left:4px solid transparent;border-bottom:4px solid #111"></div>
<div class="a" style="left:23px;top:651px;width:24px;height:2px;border-top:1px solid #a0a0a0;background:#fff;height:2px"></div>
<div class="a" style="left:23px;top:656px;width:25px;height:22px;background:#fff;border-top:1px solid #9a9a9a;border-left:1px solid #9a9a9a"></div>
<svg class="a" style="left:29px;top:660px" width="12" height="12" viewBox="0 0 12 12"><rect x="0.5" y="0.5" width="11" height="11" rx="1.5" fill="#ccc" stroke="#333"/><rect x="0.5" y="0.5" width="11" height="2.5" fill="#555"/><rect x="3" y="5" width="6" height="4" fill="none" stroke="#444"/></svg>
<div class="a" style="left:43px;top:673px;width:0;height:0;border-left:4px solid transparent;border-bottom:4px solid #111"></div>

<!--/TOOLS-->
<!--DOCK-->
<div class="a" style="left:1155px;top:82px;width:50px;height:944px;background:#5c5c5c"></div>
<div class="a" style="left:1155px;top:83px;width:49px;height:11px;background:linear-gradient(#888,#7a7a7a);border-top:1px solid #a0a0a0;border-right:1px solid #555"></div>
<svg class="a" style="left:1191px;top:85px" width="10" height="8" viewBox="0 0 10 8"><path d="M4 0.5L0.5 4L4 7.5ZM9 0.5L5.5 4L9 7.5Z" fill="#1a1a1a"/></svg>
<div class="a" style="left:1194px;top:95px;width:10px;height:931px;background:#5e5e5e"></div>
<div class="a" style="left:1204px;top:36px;width:1px;height:990px;background:#c8c8c8"></div>
<div class="a" style="left:1195px;top:95px;width:9px;height:849px;background:#b3b3b3;border-left:1px solid #5a5a5a;border-right:1px solid #8a8a8a"></div>
<div class="a" style="left:1194px;top:95px;width:10px;height:849px;background:#bcbcbc;border-left:1px solid #6a6a6a;border-right:1px solid #555"></div>
<div class="a" style="left:1197px;top:516px;width:5px;height:1px;background:#555;box-shadow:0 2px 0 #555,0 4px 0 #555"></div>
<div class="a" style="left:1154px;top:83px;width:2px;height:943px;background:#4e4e4e"></div>
<div class="a" style="left:1153px;top:449px;width:1px;height:577px;background:#606060"></div>
<div class="a" style="left:1156px;top:95px;width:38px;height:40px;background:#d6d2cc"></div>
<div class="a" style="left:1156px;top:135px;width:38px;height:1px;background:#555"></div>
<div class="a" style="left:1156px;top:95px;width:38px;height:11px;background:#bababa;border-top:1px solid #d2d2d2"></div>
<div class="a" style="left:1165px;top:99px;width:19px;height:4px;background:repeating-linear-gradient(90deg,#555 0 1px,transparent 1px 2px)"></div>
<div class="a" style="left:1156px;top:136px;width:38px;height:152px;background:#d6d2cc"></div>
<div class="a" style="left:1156px;top:288px;width:38px;height:1px;background:#555"></div>
<div class="a" style="left:1156px;top:136px;width:38px;height:11px;background:#bababa;border-top:1px solid #d2d2d2"></div>
<div class="a" style="left:1165px;top:140px;width:19px;height:4px;background:repeating-linear-gradient(90deg,#555 0 1px,transparent 1px 2px)"></div>
<div class="a" style="left:1156px;top:289px;width:38px;height:96px;background:#d6d2cc"></div>
<div class="a" style="left:1156px;top:385px;width:38px;height:1px;background:#555"></div>
<div class="a" style="left:1156px;top:289px;width:38px;height:11px;background:#bababa;border-top:1px solid #d2d2d2"></div>
<div class="a" style="left:1165px;top:293px;width:19px;height:4px;background:repeating-linear-gradient(90deg,#555 0 1px,transparent 1px 2px)"></div>
<div class="a" style="left:1156px;top:386px;width:38px;height:152px;background:#d6d2cc"></div>
<div class="a" style="left:1156px;top:538px;width:38px;height:1px;background:#555"></div>
<div class="a" style="left:1156px;top:386px;width:38px;height:11px;background:#bababa;border-top:1px solid #d2d2d2"></div>
<div class="a" style="left:1165px;top:390px;width:19px;height:4px;background:repeating-linear-gradient(90deg,#555 0 1px,transparent 1px 2px)"></div>
<div class="a" style="left:1156px;top:539px;width:38px;height:180px;background:#d6d2cc"></div>
<div class="a" style="left:1156px;top:719px;width:38px;height:1px;background:#555"></div>
<div class="a" style="left:1156px;top:539px;width:38px;height:11px;background:#bababa;border-top:1px solid #d2d2d2"></div>
<div class="a" style="left:1165px;top:543px;width:19px;height:4px;background:repeating-linear-gradient(90deg,#555 0 1px,transparent 1px 2px)"></div>
<div class="a" style="left:1156px;top:720px;width:38px;height:96px;background:#d6d2cc"></div>
<div class="a" style="left:1156px;top:816px;width:38px;height:1px;background:#555"></div>
<div class="a" style="left:1156px;top:720px;width:38px;height:11px;background:#bababa;border-top:1px solid #d2d2d2"></div>
<div class="a" style="left:1165px;top:724px;width:19px;height:4px;background:repeating-linear-gradient(90deg,#555 0 1px,transparent 1px 2px)"></div>
<div class="a" style="left:1156px;top:817px;width:38px;height:69px;background:#d6d2cc"></div>
<div class="a" style="left:1156px;top:886px;width:38px;height:1px;background:#555"></div>
<div class="a" style="left:1156px;top:817px;width:38px;height:11px;background:#bababa;border-top:1px solid #d2d2d2"></div>
<div class="a" style="left:1165px;top:821px;width:19px;height:4px;background:repeating-linear-gradient(90deg,#555 0 1px,transparent 1px 2px)"></div>
<div class="a" style="left:1156px;top:887px;width:38px;height:96px;background:#d6d2cc"></div>
<div class="a" style="left:1156px;top:983px;width:38px;height:1px;background:#555"></div>
<div class="a" style="left:1156px;top:887px;width:38px;height:11px;background:#bababa;border-top:1px solid #d2d2d2"></div>
<div class="a" style="left:1165px;top:891px;width:19px;height:4px;background:repeating-linear-gradient(90deg,#555 0 1px,transparent 1px 2px)"></div>
<div class="a" style="left:1156px;top:984px;width:38px;height:39px;background:#d6d2cc"></div>
<div class="a" style="left:1156px;top:1023px;width:38px;height:1px;background:#555"></div>
<div class="a" style="left:1156px;top:984px;width:38px;height:11px;background:#bababa;border-top:1px solid #d2d2d2"></div>
<div class="a" style="left:1165px;top:988px;width:19px;height:4px;background:repeating-linear-gradient(90deg,#555 0 1px,transparent 1px 2px)"></div>
<div class="a" style="left:1156px;top:1024px;width:38px;height:2px;background:#d6d2cc"></div>
<div class="a" style="left:1156px;top:1026px;width:38px;height:1px;background:#555"></div>
<div class="a" style="left:1156px;top:1024px;width:38px;height:11px;background:#bababa;border-top:1px solid #d2d2d2"></div>
<div class="a" style="left:1165px;top:1028px;width:19px;height:4px;background:repeating-linear-gradient(90deg,#555 0 1px,transparent 1px 2px)"></div>
<div class="a" style="left:1160px;top:147px;width:29px;height:24px;background:#8a8a8a;border:1px solid #707070;border-radius:3px"></div>
<svg class="a" style="left:1166px;top:108px" width="20" height="20" viewBox="0 0 20 20"><path d="M14.5 10.0L19.0 10.0" stroke="#888" stroke-width="1.7"/><path d="M13.9 12.2L17.8 14.5" stroke="#555" stroke-width="1.7"/><path d="M12.2 13.9L14.5 17.8" stroke="#333" stroke-width="1.7"/><path d="M10.0 14.5L10.0 19.0" stroke="#222" stroke-width="1.7"/><path d="M7.8 13.9L5.5 17.8" stroke="#1a1a1a" stroke-width="1.7"/><path d="M6.1 12.2L2.2 14.5" stroke="#1a1a1a" stroke-width="1.7"/><path d="M5.5 10.0L1.0 10.0" stroke="#bbb" stroke-width="1.7"/><path d="M6.1 7.8L2.2 5.5" stroke="#c4c4c4" stroke-width="1.7"/><path d="M7.7 6.1L5.5 2.2" stroke="#bdbdbd" stroke-width="1.7"/><path d="M10.0 5.5L10.0 1.0" stroke="#aaa" stroke-width="1.7"/><path d="M12.2 6.1L14.5 2.2" stroke="#999" stroke-width="1.7"/><path d="M13.9 7.7L17.8 5.5" stroke="#8a8a8a" stroke-width="1.7"/></svg>
<svg class="a" style="left:1166px;top:149px" width="20" height="20" viewBox="0 0 20 20"><defs><linearGradient id="dpg" x1="0" y1="0" x2="1" y2="1"><stop offset="0" stop-color="#fff"/><stop offset="1" stop-color="#aaa"/></linearGradient></defs><path d="M9.5 4.5H3.5L1 7V16.5H9.5Z" fill="url(#dpg)" stroke="#111" stroke-width="1.2"/><path d="M9.5 4.5H15.5L18 7V16.5H9.5Z" fill="url(#dpg)" stroke="#111" stroke-width="1.2"/><path d="M9.5 1V20" stroke="#333" stroke-width="0.8"/></svg>
<svg class="a" style="left:1166px;top:177px" width="20" height="20" viewBox="0 0 20 20"><defs><linearGradient id="dly" x1="0" y1="0" x2="0" y2="1"><stop offset="0" stop-color="#fafafa"/><stop offset="1" stop-color="#999"/></linearGradient></defs><path d="M1 14L10 8L19 14L10 20Z" fill="#444"/><path d="M1 8.5L10 2.5L19 8.5L10 14.5Z" fill="url(#dly)" stroke="#aaa" stroke-width="0.6"/></svg>
<svg class="a" style="left:1166px;top:205px" width="20" height="20" viewBox="0 0 20 20"><g fill="none" stroke="#1a1a1a" stroke-width="1.5"><ellipse cx="5.5" cy="5.5" rx="4.5" ry="2.6" transform="rotate(45 5.5 5.5)"/><ellipse cx="10" cy="11" rx="3" ry="2.2" transform="rotate(45 10 11)"/><ellipse cx="15" cy="14" rx="3.8" ry="2.8" transform="rotate(-20 15 14)"/></g></svg>
<svg class="a" style="left:1166px;top:233px" width="20" height="20" viewBox="0 0 20 20"><rect x="5" y="6" width="13" height="13" fill="#333"/><circle cx="11.5" cy="12.5" r="4.5" fill="#f4f4f4" stroke="#999" stroke-width="1"/><circle cx="11.5" cy="12.5" r="3" fill="none" stroke="#777" stroke-width="0.6"/><circle cx="5.5" cy="5.5" r="4" fill="#aaa" stroke="#333" stroke-width="1"/></svg>
<svg class="a" style="left:1166px;top:261px" width="20" height="20" viewBox="0 0 20 20"><path d="M1 3.5H18M1 6H18M1 16H18M1 18.5H18M1 8.5H5M14 8.5H18M1 11H5M14 11H18M1 13.5H5M14 13.5H18" stroke="#222" stroke-width="1"/><ellipse cx="9.5" cy="11" rx="3.5" ry="3.2" fill="#111"/></svg>
<svg class="a" style="left:1166px;top:303px" width="20" height="20" viewBox="0 0 20 20"><defs><linearGradient id="dp1" x1="0" y1="0" x2="0" y2="1"><stop offset="0" stop-color="#fff"/><stop offset="1" stop-color="#ccc"/></linearGradient></defs><rect x="7" y="2" width="11" height="13" fill="url(#dp1)" stroke="#1a1a1a" stroke-width="1.2"/><rect x="7" y="2" width="11" height="3" fill="#777"/><path d="M10 8H18M10 11.5H18" stroke="#888" stroke-width="1.4"/><rect x="2.5" y="9.5" width="6" height="6" fill="#fff" stroke="#222"/><rect x="4.5" y="11.5" width="6" height="6" fill="#ccc" stroke="#222"/></svg>
<svg class="a" style="left:1166px;top:331px" width="20" height="20" viewBox="0 0 20 20"><defs><linearGradient id="dp2" x1="0" y1="0" x2="1" y2="1"><stop offset="0" stop-color="#fff"/><stop offset="1" stop-color="#999"/></linearGradient></defs><rect x="7" y="2" width="11" height="13" fill="#111"/><rect x="7" y="2" width="11" height="3" fill="#777"/><rect x="8" y="5" width="8" height="8" fill="url(#dp2)"/><rect x="2.5" y="9.5" width="6" height="6" fill="#fff" stroke="#222"/><rect x="4.5" y="11.5" width="6" height="6" fill="#ccc" stroke="#222"/></svg>
<svg class="a" style="left:1166px;top:359px" width="20" height="20" viewBox="0 0 20 20"><rect x="2.5" y="3" width="15" height="14" fill="#f0f0f0" stroke="#1a1a1a" stroke-width="1.2"/><rect x="2.5" y="3" width="15" height="3.5" fill="#777"/><path d="M2.5 9.5H17.5M2.5 13H17.5M6 6.5V17" stroke="#333" stroke-width="0.9"/></svg>
<svg class="a" style="left:1166px;top:399px" width="20" height="20" viewBox="0 0 20 20"><defs><linearGradient id="dinf" x1="0" y1="0" x2="0" y2="1"><stop offset="0" stop-color="#888"/><stop offset="1" stop-color="#222"/></linearGradient></defs><circle cx="10" cy="10" r="8.5" fill="url(#dinf)" stroke="#222" stroke-width="0.8"/><circle cx="10" cy="5.5" r="1.6" fill="#fff"/><path d="M7.5 8.5H11V14H12.5V15.5H7.5V14H9V10H7.5Z" fill="#fff"/></svg>
<svg class="a" style="left:1166px;top:427px" width="20" height="20" viewBox="0 0 20 20"><path d="M2 15Q0 9 6 5Q13 1 18 4Q20 7 15 9Q12 10 14 13Q13 18 7 17Q3 17 2 15Z" fill="#333"/><circle cx="6" cy="8.5" r="1.6" fill="#ddd"/><circle cx="9.5" cy="5.5" r="1.6" fill="#ddd"/><circle cx="14" cy="4.5" r="1.4" fill="#ddd"/><circle cx="5" cy="13.5" r="1.6" fill="#ddd"/><circle cx="9.5" cy="14" r="1.6" fill="#ddd"/></svg>
<svg class="a" style="left:1166px;top:455px" width="20" height="20" viewBox="0 0 20 20"><rect x="1.5" y="2.5" width="17" height="13" fill="#222"/><rect x="2.5" y="3.5" width="3" height="3" fill="#444"/><rect x="6.5" y="3.5" width="3" height="3" fill="#777"/><rect x="10.5" y="3.5" width="3" height="3" fill="#999"/><rect x="14.5" y="3.5" width="3" height="3" fill="#fff"/><rect x="2.5" y="7.5" width="3" height="3" fill="#666"/><rect x="6.5" y="7.5" width="3" height="3" fill="#555"/><rect x="10.5" y="7.5" width="3" height="3" fill="#888"/><rect x="14.5" y="7.5" width="3" height="3" fill="#fff"/><rect x="2.5" y="11.5" width="3" height="3" fill="#777"/><rect x="6.5" y="11.5" width="3" height="3" fill="#eee"/><rect x="10.5" y="11.5" width="3" height="3" fill="#fff"/><rect x="14.5" y="11.5" width="3" height="3" fill="#ccc"/></svg>
<svg class="a" style="left:1166px;top:483px" width="20" height="20" viewBox="0 0 20 20"><defs><linearGradient id="dgr" x1="0" y1="0" x2="1" y2="1"><stop offset="0" stop-color="#fff"/><stop offset="1" stop-color="#333"/></linearGradient></defs><rect x="2.5" y="4.5" width="16" height="11" fill="#888"/><rect x="1.5" y="3.5" width="16" height="11" fill="url(#dgr)" stroke="#111"/></svg>
<svg class="a" style="left:1166px;top:511px" width="20" height="20" viewBox="0 0 20 20"><path d="M1 5H18" stroke="#444" stroke-width="1" stroke-dasharray="2 1"/><path d="M1 8.5H18" stroke="#333" stroke-width="1"/><path d="M1 12H18" stroke="#444" stroke-width="1.8"/><path d="M1 16H18" stroke="#333" stroke-width="2.6"/></svg>
<svg class="a" style="left:1166px;top:553px" width="20" height="20" viewBox="0 0 20 20"><text x="9" y="16.5" text-anchor="middle" font-family="Liberation Sans" font-size="17" fill="#333" stroke="#333" stroke-width="0.5">A</text><path d="M16.5 2.5V17.5" stroke="#111" stroke-width="1.2"/></svg>
<svg class="a" style="left:1166px;top:581px" width="20" height="20" viewBox="0 0 20 20"><path d="M13.5 3V18M10.5 3V18" stroke="#222" stroke-width="1.5"/><path d="M14 3H9Q5 3 5 6.5Q5 10 9 10H11V3" fill="#444"/></svg>
<svg class="a" style="left:1166px;top:609px" width="20" height="20" viewBox="0 0 20 20"><path d="M14.5 3V17M11.5 3V17" stroke="#222" stroke-width="1.5"/><path d="M15 3H10Q6 3 6 6.5Q6 10 10 10H12V3" fill="#444"/><rect x="2.5" y="10.5" width="5" height="5" fill="#fff" stroke="#222"/><rect x="4.5" y="12.5" width="5" height="5" fill="#ccc" stroke="#222"/></svg>
<svg class="a" style="left:1166px;top:637px" width="20" height="20" viewBox="0 0 20 20"><text x="12" y="15.5" text-anchor="middle" font-family="Liberation Sans" font-size="17" fill="#333" stroke="#333" stroke-width="0.5">A</text><rect x="2.5" y="10.5" width="5" height="5" fill="#fff" stroke="#222"/><rect x="4.5" y="12.5" width="5" height="5" fill="#ccc" stroke="#222"/></svg>
<svg class="a" style="left:1166px;top:665px" width="20" height="20" viewBox="0 0 20 20"><defs><linearGradient id="dos" x1="0" y1="0" x2="1" y2="1"><stop offset="0" stop-color="#fff"/><stop offset="1" stop-color="#999"/></linearGradient></defs><path d="M6 3H9L10 4L11 3H18V8L17 9L18 10V16H11L10 15L9 16H6Z" fill="url(#dos)" stroke="#444" stroke-width="0.9"/><rect x="2.5" y="10.5" width="5" height="5" fill="#fff" stroke="#222"/><rect x="4.5" y="12.5" width="5" height="5" fill="#ccc" stroke="#222"/></svg>
<svg class="a" style="left:1166px;top:693px" width="20" height="20" viewBox="0 0 20 20"><text x="9" y="9" text-anchor="middle" font-family="Liberation Sans" font-size="10" fill="#333">abc</text><path d="M2 11.5H10" stroke="#555"/><path d="M9 9V16Q10 19 13 19H14Q16 18 16 15V12Q15 11 14 12Q13 11 12 12Q11 11 11 12V9Q10 8 9 9Z" fill="#fff" stroke="#222" stroke-width="0.9"/></svg>
<svg class="a" style="left:1166px;top:733px" width="20" height="20" viewBox="0 0 20 20"><defs><linearGradient id="dck" x1="0" y1="0" x2="1" y2="1"><stop offset="0" stop-color="#fff"/><stop offset="1" stop-color="#999"/></linearGradient></defs><rect x="2.5" y="1.5" width="15" height="16" fill="url(#dck)" stroke="#555"/><path d="M5 9L8.5 13L15 4" fill="none" stroke="#111" stroke-width="1.6"/></svg>
<svg class="a" style="left:1166px;top:761px" width="20" height="20" viewBox="0 0 20 20"><path d="M9 2H17V17H9V14.5H14.5V4.5H9Z" fill="#111"/><rect x="2.5" y="7.5" width="10" height="5" fill="#888" stroke="#444"/></svg>
<svg class="a" style="left:1166px;top:789px" width="20" height="20" viewBox="0 0 20 20"><defs><linearGradient id="dtr" x1="0" y1="0" x2="0" y2="1"><stop offset="0" stop-color="#fff"/><stop offset="1" stop-color="#bbb"/></linearGradient></defs><rect x="2.5" y="1.5" width="15" height="17" fill="url(#dtr)" stroke="#333"/><path d="M2.5 1.5L17.5 18.5M17.5 1.5L2.5 18.5" stroke="#222"/><path d="M2.5 18.5L10 10L17.5 18.5Z" fill="#222"/></svg>
<svg class="a" style="left:1166px;top:832px" width="20" height="20" viewBox="0 0 20 20"><path d="M3 4Q9 1 12 5L8 10Q14 10 11 16Q7 18 3 15Q7 13 6 11Z" fill="#333"/><path d="M9 7H17V12H9L7 9.5Z" fill="#eee" stroke="#444"/><circle cx="10" cy="9.5" r="0.8" fill="#444"/></svg>
<svg class="a" style="left:1166px;top:859px" width="20" height="20" viewBox="0 0 20 20"><path d="M1 7H8M5 4L8 7L5 10" stroke="#222" stroke-width="1.6" fill="none"/><path d="M8 1.5H13L16 4.5V11H8Z" fill="#eee" stroke="#555"/><circle cx="14" cy="14" r="3.2" fill="#222"/><path d="M14 9.5V18.5M9.5 14H18.5M11 11L17 17M17 11L11 17" stroke="#222" stroke-width="1.2"/><circle cx="14" cy="14" r="1.1" fill="#ddd"/></svg>
<svg class="a" style="left:1166px;top:899px" width="20" height="20" viewBox="0 0 20 20"><rect x="2" y="3" width="13" height="4" fill="#444"/><rect x="2" y="8" width="10" height="4" fill="#444"/><path d="M4 5H13M4 10H10" stroke="#ccc"/><path d="M10 9V16Q11 19 14 19H15Q17 18 17 15V12Q16 11 15 12Q14 11 13 12Q12 11 12 12V9Q11 8 10 9Z" fill="#fff" stroke="#222" stroke-width="0.9"/></svg>
<svg class="a" style="left:1166px;top:927px" width="20" height="20" viewBox="0 0 20 20"><path d="M1.5 4Q5 3 9 5V17Q5 15 1.5 16Z" fill="#fff" stroke="#222" stroke-width="1.2"/><path d="M17 4Q13.5 3 10 5V17Q13.5 15 17 16Z" fill="#fff" stroke="#222" stroke-width="1.2"/><path d="M12.5 2V19" stroke="#222" stroke-width="2"/><path d="M15 3V18" stroke="#444" stroke-width="1.2"/></svg>
<svg class="a" style="left:1166px;top:955px" width="20" height="20" viewBox="0 0 20 20"><text x="10" y="14" text-anchor="middle" font-family="Liberation Serif" font-weight="bold" font-size="17" fill="#333">T</text><path d="M3 17L5 19L7 17L9 19L11 17L13 19L15 17L17 19" fill="none" stroke="#333"/></svg>
<svg class="a" style="left:1166px;top:996px" width="20" height="20" viewBox="0 0 20 20"><path d="M4 4Q11 0 15 4L10 9Q16 10 13 15Q9 20 4 17Q9 13 8 11Z" fill="#333"/><path d="M5 4.5Q10 2 13 4" stroke="#999" fill="none"/></svg>
<!--/DOCK-->
<!--PAGES-->
<div class="a" style="left:981px;top:133px;width:173px;height:317px;background:#5e5e5e"></div>
<div class="a" style="left:982px;top:137px;width:172px;height:17px;background:#8e8e8e"></div>
<div class="a" style="left:982px;top:137px;width:46px;height:17px;background:#bdbdbd"></div>
<svg class="a" style="left:986px;top:140px" width="6" height="11" viewBox="0 0 6 11"><path d="M0.5 4L3 1L5.5 4M0.5 7L3 10L5.5 7" fill="none" stroke="#222"/></svg>
<div class="a" style="left:996px;top:140px;font-size:9.4px;font-weight:bold;color:#1a1a1a;letter-spacing:-0.2px;-webkit-text-stroke:0.3px #1a1a1a">Pages</div>
<div class="a" style="left:1028px;top:137px;width:1px;height:17px;background:#6e6e6e"></div>
<div class="a" style="left:1043px;top:137px;width:1px;height:17px;background:#6e6e6e"></div>
<div class="a" style="left:1058px;top:137px;width:1px;height:17px;background:#6e6e6e"></div>
<div class="a" style="left:1073px;top:137px;width:1px;height:17px;background:#6e6e6e"></div>
<div class="a" style="left:1089px;top:137px;width:1px;height:17px;background:#6e6e6e"></div>
<div class="a" style="left:1035px;top:140px;width:8px;overflow:hidden;font-size:9.6px;font-weight:bold;color:#2a2a2a;-webkit-text-stroke:0.3px #2a2a2a">La</div>
<div class="a" style="left:1050px;top:140px;width:8px;overflow:hidden;font-size:9.6px;font-weight:bold;color:#2a2a2a;-webkit-text-stroke:0.3px #2a2a2a">Li</div>
<div class="a" style="left:1065px;top:140px;width:8px;overflow:hidden;font-size:9.6px;font-weight:bold;color:#2a2a2a;-webkit-text-stroke:0.3px #2a2a2a">A</div>
<div class="a" style="left:1080px;top:140px;width:8px;overflow:hidden;font-size:9.6px;font-weight:bold;color:#2a2a2a;-webkit-text-stroke:0.3px #2a2a2a">Te</div>
<svg class="a" style="left:1113px;top:141px" width="10" height="8" viewBox="0 0 10 8"><path d="M0.5 0.5L4 4L0.5 7.5ZM5.5 0.5L9 4L5.5 7.5Z" fill="#1a1a1a"/></svg>
<div class="a" style="left:1130px;top:140px;width:1px;height:11px;background:#444"></div>
<svg class="a" style="left:1136px;top:141px" width="14" height="9" viewBox="0 0 14 9"><path d="M0 3H5L2.5 6Z" fill="#222"/><path d="M6 1H14M6 3.5H14M6 6H14M6 8.5H14" stroke="#222" stroke-width="1"/></svg>
<div class="a" style="left:982px;top:154px;width:172px;height:86px;background:#d6d2cc"></div>
<div class="a" style="left:982px;top:240px;width:172px;height:5px;background:#eeeae4;border-top:1px solid #111;border-bottom:1px solid #8a8a8a"></div>
<div class="a" style="left:982px;top:245px;width:172px;height:180px;background:#d6d2cc"></div>
<div class="a" style="left:1140px;top:156px;width:14px;height:83px;background:repeating-conic-gradient(#fbfaf8 0 25%,#cdc9c1 0 50%) 0 0/2px 2px"></div>
<div class="a" style="left:1141px;top:156px;width:13px;height:14px;background:#d6d2cc;border-top:1px solid #fff;border-left:1px solid #fff;border-right:1px solid #555;border-bottom:1px solid #555"></div>
<div class="a" style="left:1144px;top:161px;border-left:3.5px solid transparent;border-right:3.5px solid transparent;border-bottom:3.5px solid #777"></div>
<div class="a" style="left:1141px;top:225px;width:13px;height:14px;background:#d6d2cc;border-top:1px solid #fff;border-left:1px solid #fff;border-right:1px solid #555;border-bottom:1px solid #555"></div>
<div class="a" style="left:1144px;top:230px;border-left:3.5px solid transparent;border-right:3.5px solid transparent;border-top:3.5px solid #777"></div>
<div class="a" style="left:1140px;top:245px;width:14px;height:179px;background:repeating-conic-gradient(#fbfaf8 0 25%,#cdc9c1 0 50%) 0 0/2px 2px"></div>
<div class="a" style="left:1141px;top:245px;width:13px;height:14px;background:#d6d2cc;border-top:1px solid #fff;border-left:1px solid #fff;border-right:1px solid #555;border-bottom:1px solid #555"></div>
<div class="a" style="left:1144px;top:250px;border-left:3.5px solid transparent;border-right:3.5px solid transparent;border-bottom:3.5px solid #777"></div>
<div class="a" style="left:1141px;top:410px;width:13px;height:14px;background:#d6d2cc;border-top:1px solid #fff;border-left:1px solid #fff;border-right:1px solid #555;border-bottom:1px solid #555"></div>
<div class="a" style="left:1144px;top:415px;border-left:3.5px solid transparent;border-right:3.5px solid transparent;border-top:3.5px solid #777"></div>
<div class="a" style="left:982px;top:425px;width:172px;height:16px;background:#d6d2cc;border-top:1px solid #777;border-bottom:1px solid #666"></div>
<svg class="a" style="left:1055px;top:428px" width="20" height="12" viewBox="0 0 20 12"><rect x="1" y="4" width="8" height="6" fill="#eee" stroke="#888"/><path d="M6 1H10L12 3V8H6Z" fill="#eee" stroke="#888"/><path d="M15 8H19L17 10Z" fill="#333"/></svg>
<svg class="a" style="left:1088px;top:428px" width="11" height="11" viewBox="0 0 11 11"><rect x="1" y="1" width="9" height="9" fill="#ddd" stroke="#888"/><rect x="3.5" y="3.5" width="4" height="4" fill="none" stroke="#555"/></svg>
<svg class="a" style="left:1117px;top:427px" width="12" height="12" viewBox="0 0 12 12"><rect x="1" y="2" width="10" height="2" fill="#ccc" stroke="#999" stroke-width="0.6"/><path d="M2 4H10L9 11H3Z" fill="#ddd" stroke="#999" stroke-width="0.8"/><path d="M5 5V10M7 5V10" stroke="#999"/></svg>
<svg class="a" style="left:1142px;top:430px" width="10" height="10" viewBox="0 0 10 10"><g fill="#333"><rect x="8" y="0" width="1" height="1"/><rect x="6" y="2" width="1" height="1"/><rect x="8" y="2" width="1" height="1"/><rect x="4" y="4" width="1" height="1"/><rect x="6" y="4" width="1" height="1"/><rect x="8" y="4" width="1" height="1"/><rect x="2" y="6" width="1" height="1"/><rect x="4" y="6" width="1" height="1"/><rect x="6" y="6" width="1" height="1"/><rect x="8" y="6" width="1" height="1"/><rect x="0" y="8" width="1" height="1"/><rect x="2" y="8" width="1" height="1"/><rect x="4" y="8" width="1" height="1"/><rect x="6" y="8" width="1" height="1"/><rect x="8" y="8" width="1" height="1"/></g></svg>
<div class="a" style="left:982px;top:441px;width:172px;height:8px;background:#d6d2cc"></div>
<div class="a" style="left:1058px;top:444px;width:19px;height:3px;background:repeating-linear-gradient(90deg,#444 0 1px,transparent 1px 2px)"></div>

<!--/PAGES-->
<!--DIALOG-->
<div class="a" style="left:217px;top:277px;width:552px;height:497px;background:#d4d0c8;border-right:1px solid #404040;border-bottom:1px solid #404040"></div>
<div class="a" style="left:218px;top:278px;width:550px;height:495px;border-top:1px solid #fff;border-left:1px solid #fff;border-right:1px solid #ebe7e0;border-bottom:1px solid #ebe7e0"></div>
<div class="a" style="left:220px;top:280px;width:546px;height:19px;background:linear-gradient(to right,#0a246a,#a6caf0)"></div>
<div class="a" style="left:221px;top:283px;font-size:12.6px;font-weight:bold;color:#fff;white-space:nowrap;letter-spacing:-0.55px">New Document</div>
<div class="t" style="right:870px;top:317px">Do<u>c</u>ument Preset:</div>
<div class="a" style="left:341px;top:315px;width:236px;height:21px;background:#fff;border-top:1px solid #808080;border-left:1px solid #808080;border-right:1px solid #fff;border-bottom:1px solid #fff"><div class="a" style="left:0;top:0;right:0;bottom:0;border-top:1px solid #404040;border-left:1px solid #404040;border-right:1px solid #d4d0c8;border-bottom:1px solid #d4d0c8"></div></div>
<div class="t" style="left:346px;top:318px">A6_3mm_bleed</div>
<div class="a" style="left:559px;top:317px;width:16px;height:17px;background:#d4d0c8;border-top:1px solid #d4d0c8;border-left:1px solid #d4d0c8;border-right:1px solid #404040;border-bottom:1px solid #404040"><div class="a" style="left:0;top:0;right:0;bottom:0;border-top:1px solid #fff;border-left:1px solid #fff;border-right:1px solid #808080;border-bottom:1px solid #808080"></div></div>
<div class="a" style="left:563px;top:324px;width:0;height:0;border-left:3.5px solid transparent;border-right:3.5px solid transparent;border-top:4px solid #000"></div>
<div class="t" style="right:870px;top:342px">Intent:</div>
<div class="a" style="left:341px;top:339px;width:236px;height:21px;background:#fff;border-top:1px solid #808080;border-left:1px solid #808080;border-right:1px solid #fff;border-bottom:1px solid #fff"><div class="a" style="left:0;top:0;right:0;bottom:0;border-top:1px solid #404040;border-left:1px solid #404040;border-right:1px solid #d4d0c8;border-bottom:1px solid #d4d0c8"></div></div>
<div class="t" style="left:345px;top:342px">Print</div>
<div class="a" style="left:559px;top:341px;width:16px;height:17px;background:#d4d0c8;border-top:1px solid #d4d0c8;border-left:1px solid #d4d0c8;border-right:1px solid #404040;border-bottom:1px solid #404040"><div class="a" style="left:0;top:0;right:0;bottom:0;border-top:1px solid #fff;border-left:1px solid #fff;border-right:1px solid #808080;border-bottom:1px solid #808080"></div></div>
<div class="a" style="left:563px;top:348px;width:0;height:0;border-left:3.5px solid transparent;border-right:3.5px solid transparent;border-top:4px solid #000"></div>
<div class="t" style="right:870px;top:367px">Number of <u>P</u>ages:</div>
<div class="a" style="left:341px;top:364px;width:64px;height:21px;background:#fff;border-top:1px solid #808080;border-left:1px solid #808080;border-right:1px solid #fff;border-bottom:1px solid #fff"><div class="a" style="left:0;top:0;right:0;bottom:0;border-top:1px solid #404040;border-left:1px solid #404040;border-right:1px solid #d4d0c8;border-bottom:1px solid #d4d0c8"></div></div>
<div class="a" style="left:344px;top:367px;width:9px;height:15px;background:#0a246a"></div>
<div class="t" style="left:344px;top:367px;color:#fff">1</div>
<div class="t" style="right:870px;top:392px">St<u>a</u>rt Page #:</div>
<div class="a" style="left:341px;top:389px;width:64px;height:21px;background:#fff;border-top:1px solid #808080;border-left:1px solid #808080;border-right:1px solid #fff;border-bottom:1px solid #fff"><div class="a" style="left:0;top:0;right:0;bottom:0;border-top:1px solid #404040;border-left:1px solid #404040;border-right:1px solid #d4d0c8;border-bottom:1px solid #d4d0c8"></div></div>
<div class="t" style="left:344px;top:392px">1</div>
<div class="a" style="left:440px;top:368px;width:13px;height:13px;background:#fff;border-top:1px solid #808080;border-left:1px solid #808080;border-right:1px solid #fff;border-bottom:1px solid #fff"><div class="a" style="left:0;top:0;right:0;bottom:0;border-top:1px solid #404040;border-left:1px solid #404040;border-right:1px solid #d4d0c8;border-bottom:1px solid #d4d0c8"></div></div>
<div class="t" style="left:457px;top:367px;">Facing Pages</div>
<div class="a" style="left:440px;top:393px;width:13px;height:13px;background:#fff;border-top:1px solid #808080;border-left:1px solid #808080;border-right:1px solid #fff;border-bottom:1px solid #fff"><div class="a" style="left:0;top:0;right:0;bottom:0;border-top:1px solid #404040;border-left:1px solid #404040;border-right:1px solid #d4d0c8;border-bottom:1px solid #d4d0c8"></div></div>
<div class="t" style="left:457px;top:392px;">Primary Text Frame</div>
<div class="a" style="left:650px;top:315px;width:101px;height:21px;background:#d4d0c8;border:1px solid #000"><div class="a" style="left:0;top:0;right:0;bottom:0;border-top:1px solid #fff;border-left:1px solid #fff;border-right:1px solid #404040;border-bottom:1px solid #404040"><div class="a" style="left:0;top:0;right:0;bottom:0;border-right:1px solid #808080;border-bottom:1px solid #808080"></div></div></div>
<div class="t" style="left:650px;top:318px;width:101px;text-align:center">OK</div>
<div class="a" style="left:650px;top:345px;width:101px;height:20px;background:#d4d0c8;border-top:1px solid #fff;border-left:1px solid #fff;border-right:1px solid #404040;border-bottom:1px solid #404040"><div class="a" style="left:0;top:0;right:0;bottom:0;border-right:1px solid #808080;border-bottom:1px solid #808080"></div></div>
<div class="t" style="left:650px;top:348px;width:101px;text-align:center">Cancel</div>
<div class="a" style="left:650px;top:380px;width:101px;height:20px;background:#d4d0c8;border-top:1px solid #fff;border-left:1px solid #fff;border-right:1px solid #404040;border-bottom:1px solid #404040"><div class="a" style="left:0;top:0;right:0;bottom:0;border-right:1px solid #808080;border-bottom:1px solid #808080"></div></div>
<div class="t" style="left:650px;top:383px;width:101px;text-align:center">Save Preset...</div>
<div class="a" style="left:650px;top:410px;width:101px;height:20px;background:#d4d0c8;border-top:1px solid #fff;border-left:1px solid #fff;border-right:1px solid #404040;border-bottom:1px solid #404040"><div class="a" style="left:0;top:0;right:0;bottom:0;border-right:1px solid #808080;border-bottom:1px solid #808080"></div></div>
<div class="t" style="left:650px;top:413px;width:101px;text-align:center">Fewer Options</div>
<div class="a" style="left:235px;top:430px;width:405px;height:80px;border-top:1px solid #808080;border-left:1px solid #808080;border-right:1px solid #fff;border-bottom:1px solid #fff"><div class="a" style="left:0;top:0;right:0;bottom:0;border-top:1px solid #fff;border-left:1px solid #fff;border-right:1px solid #808080;border-bottom:1px solid #808080"></div></div>
<div class="t" style="left:242px;top:423px;background:#d4d0c8;padding:0 0 0 2px">Page <u>S</u>ize:</div>
<div class="a" style="left:305px;top:419px;width:201px;height:21px;background:#fff;border-top:1px solid #808080;border-left:1px solid #808080;border-right:1px solid #fff;border-bottom:1px solid #fff"><div class="a" style="left:0;top:0;right:0;bottom:0;border-top:1px solid #404040;border-left:1px solid #404040;border-right:1px solid #d4d0c8;border-bottom:1px solid #d4d0c8"></div></div>
<div class="t" style="left:310px;top:422px">[Custom]</div>
<div class="a" style="left:488px;top:421px;width:16px;height:17px;background:#d4d0c8;border-top:1px solid #d4d0c8;border-left:1px solid #d4d0c8;border-right:1px solid #404040;border-bottom:1px solid #404040"><div class="a" style="left:0;top:0;right:0;bottom:0;border-top:1px solid #fff;border-left:1px solid #fff;border-right:1px solid #808080;border-bottom:1px solid #808080"></div></div>
<div class="a" style="left:492px;top:428px;width:0;height:0;border-left:3.5px solid transparent;border-right:3.5px solid transparent;border-top:4px solid #000"></div>
<div class="t" style="right:907px;top:457px"><u>W</u>idth:</div>
<div class="a" style="left:301px;top:454px;width:80px;height:21px;background:#fff;border-top:1px solid #808080;border-left:1px solid #808080;border-right:1px solid #fff;border-bottom:1px solid #fff"><div class="a" style="left:0;top:0;right:0;bottom:0;border-top:1px solid #404040;border-left:1px solid #404040;border-right:1px solid #d4d0c8;border-bottom:1px solid #d4d0c8"></div></div>
<div class="a" style="left:303px;top:456px;width:13px;height:8px;background:#d4d0c8;border-top:1px solid #fff;border-left:1px solid #fff;border-bottom:1px solid #404040"></div>
<div class="a" style="left:303px;top:464px;width:13px;height:9px;background:#d4d0c8;border-top:1px solid #fff;border-left:1px solid #fff;border-bottom:1px solid #404040"></div>
<div class="a" style="left:316px;top:456px;width:2px;height:17px;background:#111;"></div>
<div class="a" style="left:307px;top:459px;width:0;height:0;border-left:3.0px solid transparent;border-right:3.0px solid transparent;border-bottom:3px solid #000"></div>
<div class="a" style="left:307px;top:467px;width:0;height:0;border-left:3.0px solid transparent;border-right:3.0px solid transparent;border-top:3px solid #000"></div>
<div class="t" style="left:320px;top:458px">105 mm</div>
<div class="t" style="right:907px;top:482px"><u>H</u>eight:</div>
<div class="a" style="left:301px;top:479px;width:80px;height:21px;background:#fff;border-top:1px solid #808080;border-left:1px solid #808080;border-right:1px solid #fff;border-bottom:1px solid #fff"><div class="a" style="left:0;top:0;right:0;bottom:0;border-top:1px solid #404040;border-left:1px solid #404040;border-right:1px solid #d4d0c8;border-bottom:1px solid #d4d0c8"></div></div>
<div class="a" style="left:303px;top:481px;width:13px;height:8px;background:#d4d0c8;border-top:1px solid #fff;border-left:1px solid #fff;border-bottom:1px solid #404040"></div>
<div class="a" style="left:303px;top:489px;width:13px;height:9px;background:#d4d0c8;border-top:1px solid #fff;border-left:1px solid #fff;border-bottom:1px solid #404040"></div>
<div class="a" style="left:316px;top:481px;width:2px;height:17px;background:#111;"></div>
<div class="a" style="left:307px;top:484px;width:0;height:0;border-left:3.0px solid transparent;border-right:3.0px solid transparent;border-bottom:3px solid #000"></div>
<div class="a" style="left:307px;top:492px;width:0;height:0;border-left:3.0px solid transparent;border-right:3.0px solid transparent;border-top:3px solid #000"></div>
<div class="t" style="left:320px;top:483px">148 mm</div>
<div class="t" style="left:438px;top:457px;">Orientation:</div>
<div class="a" style="left:509px;top:457px;width:21px;height:21px;background:#fff;"></div>
<div class="a" style="left:510px;top:458px;width:19px;height:1px;background:#808080;"></div>
<div class="a" style="left:510px;top:458px;width:1px;height:19px;background:#808080;"></div>
<svg class="a" style="left:512px;top:459px" width="17" height="18" viewBox="0 0 17 18"><defs><linearGradient id="ori" x1="0" y1="0" x2="1" y2="1"><stop offset="0" stop-color="#fff"/><stop offset="1" stop-color="#c8c8c8"/></linearGradient></defs><path d="M1.5 1.5H11.5L15 5V16.5H1.5Z" fill="url(#ori)"/><path d="M1.5 16.5V1.5H11.5" fill="none" stroke="#666" stroke-width="1"/><path d="M11.5 1.5L15 5V16.5H1.5" fill="none" stroke="#000" stroke-width="1.5"/><path d="M11.5 1.5V5H15" fill="#fff" stroke="#000" stroke-width="0.8"/><circle cx="8" cy="5.8" r="1.9" fill="#999" stroke="#666" stroke-width="0.8"/><path d="M5 8.5H11V11.5H10V15H6V11.5H5Z" fill="#fff" stroke="#000" stroke-width="1.2"/></svg>
<svg class="a" style="left:533px;top:458px" width="17" height="18" viewBox="0 0 17 18"><defs><linearGradient id="ori2" x1="0" y1="0" x2="1" y2="1"><stop offset="0" stop-color="#fff"/><stop offset="1" stop-color="#c8c8c8"/></linearGradient></defs><path d="M1.5 1.5H11.5L15 5V16.5H1.5Z" fill="url(#ori2)"/><path d="M1.5 16.5V1.5H11.5" fill="none" stroke="#666" stroke-width="1"/><path d="M11.5 1.5L15 5V16.5H1.5" fill="none" stroke="#000" stroke-width="1.5"/><path d="M11.5 1.5V5H15" fill="#fff" stroke="#000" stroke-width="0.8"/><circle cx="4.5" cy="9.5" r="1.6" fill="#ddd" stroke="#333" stroke-width="0.9"/><path d="M8 5.5H11V7H15V12H11V13.5H8V11.5H9V7.5H8Z" fill="#fff" stroke="#000" stroke-width="1.2"/></svg>
<div class="a" style="left:235px;top:525px;width:405px;height:42px;border-top:1px solid #808080;border-left:1px solid #808080;border-right:1px solid #fff;border-bottom:1px solid #fff"><div class="a" style="left:0;top:0;right:0;bottom:0;border-top:1px solid #fff;border-left:1px solid #fff;border-right:1px solid #808080;border-bottom:1px solid #808080"></div></div>
<div class="t" style="left:244px;top:518px;width:65px;background:#d4d0c8;padding:0 0 0 10px">Columns</div>
<div class="t" style="right:911px;top:539px"><u>N</u>umber:</div>
<div class="a" style="left:300px;top:536px;width:80px;height:21px;background:#fff;border-top:1px solid #808080;border-left:1px solid #808080;border-right:1px solid #fff;border-bottom:1px solid #fff"><div class="a" style="left:0;top:0;right:0;bottom:0;border-top:1px solid #404040;border-left:1px solid #404040;border-right:1px solid #d4d0c8;border-bottom:1px solid #d4d0c8"></div></div>
<div class="a" style="left:302px;top:538px;width:13px;height:8px;background:#d4d0c8;border-top:1px solid #fff;border-left:1px solid #fff;border-bottom:1px solid #404040"></div>
<div class="a" style="left:302px;top:546px;width:13px;height:9px;background:#d4d0c8;border-top:1px solid #fff;border-left:1px solid #fff;border-bottom:1px solid #404040"></div>
<div class="a" style="left:315px;top:538px;width:2px;height:17px;background:#111;"></div>
<div class="a" style="left:306px;top:541px;width:0;height:0;border-left:3.0px solid transparent;border-right:3.0px solid transparent;border-bottom:3px solid #000"></div>
<div class="a" style="left:306px;top:549px;width:0;height:0;border-left:3.0px solid transparent;border-right:3.0px solid transparent;border-top:3px solid #000"></div>
<div class="t" style="left:319px;top:540px">1</div>
<div class="t" style="right:737px;top:539px"><u>G</u>utter:</div>
<div class="a" style="left:474px;top:536px;width:88px;height:21px;background:#fff;border-top:1px solid #808080;border-left:1px solid #808080;border-right:1px solid #fff;border-bottom:1px solid #fff"><div class="a" style="left:0;top:0;right:0;bottom:0;border-top:1px solid #404040;border-left:1px solid #404040;border-right:1px solid #d4d0c8;border-bottom:1px solid #d4d0c8"></div></div>
<div class="a" style="left:476px;top:538px;width:13px;height:8px;background:#d4d0c8;border-top:1px solid #fff;border-left:1px solid #fff;border-bottom:1px solid #404040"></div>
<div class="a" style="left:476px;top:546px;width:13px;height:9px;background:#d4d0c8;border-top:1px solid #fff;border-left:1px solid #fff;border-bottom:1px solid #404040"></div>
<div class="a" style="left:489px;top:538px;width:2px;height:17px;background:#111;"></div>
<div class="a" style="left:480px;top:541px;width:0;height:0;border-left:3.0px solid transparent;border-right:3.0px solid transparent;border-bottom:3px solid #000"></div>
<div class="a" style="left:480px;top:549px;width:0;height:0;border-left:3.0px solid transparent;border-right:3.0px solid transparent;border-top:3px solid #000"></div>
<div class="t" style="left:493px;top:540px">4,233 mm</div>
<div class="a" style="left:235px;top:582px;width:405px;height:66px;border-top:1px solid #808080;border-left:1px solid #808080;border-right:1px solid #fff;border-bottom:1px solid #fff"><div class="a" style="left:0;top:0;right:0;bottom:0;border-top:1px solid #fff;border-left:1px solid #fff;border-right:1px solid #808080;border-bottom:1px solid #808080"></div></div>
<div class="t" style="left:248px;top:575px;width:60px;background:#d4d0c8;padding:0 0 0 8px">Margins</div>
<div class="t" style="right:892px;top:596px"><u>T</u>op:</div>
<div class="a" style="left:319px;top:593px;width:80px;height:21px;background:#fff;border-top:1px solid #808080;border-left:1px solid #808080;border-right:1px solid #fff;border-bottom:1px solid #fff"><div class="a" style="left:0;top:0;right:0;bottom:0;border-top:1px solid #404040;border-left:1px solid #404040;border-right:1px solid #d4d0c8;border-bottom:1px solid #d4d0c8"></div></div>
<div class="a" style="left:321px;top:595px;width:13px;height:8px;background:#d4d0c8;border-top:1px solid #fff;border-left:1px solid #fff;border-bottom:1px solid #404040"></div>
<div class="a" style="left:321px;top:603px;width:13px;height:9px;background:#d4d0c8;border-top:1px solid #fff;border-left:1px solid #fff;border-bottom:1px solid #404040"></div>
<div class="a" style="left:334px;top:595px;width:2px;height:17px;background:#111;"></div>
<div class="a" style="left:325px;top:598px;width:0;height:0;border-left:3.0px solid transparent;border-right:3.0px solid transparent;border-bottom:3px solid #000"></div>
<div class="a" style="left:325px;top:606px;width:0;height:0;border-left:3.0px solid transparent;border-right:3.0px solid transparent;border-top:3px solid #000"></div>
<div class="t" style="left:338px;top:597px">3 mm</div>
<div class="t" style="right:892px;top:621px"><u>B</u>ottom:</div>
<div class="a" style="left:319px;top:618px;width:80px;height:21px;background:#fff;border-top:1px solid #808080;border-left:1px solid #808080;border-right:1px solid #fff;border-bottom:1px solid #fff"><div class="a" style="left:0;top:0;right:0;bottom:0;border-top:1px solid #404040;border-left:1px solid #404040;border-right:1px solid #d4d0c8;border-bottom:1px solid #d4d0c8"></div></div>
<div class="a" style="left:321px;top:620px;width:13px;height:8px;background:#d4d0c8;border-top:1px solid #fff;border-left:1px solid #fff;border-bottom:1px solid #404040"></div>
<div class="a" style="left:321px;top:628px;width:13px;height:9px;background:#d4d0c8;border-top:1px solid #fff;border-left:1px solid #fff;border-bottom:1px solid #404040"></div>
<div class="a" style="left:334px;top:620px;width:2px;height:17px;background:#111;"></div>
<div class="a" style="left:325px;top:623px;width:0;height:0;border-left:3.0px solid transparent;border-right:3.0px solid transparent;border-bottom:3px solid #000"></div>
<div class="a" style="left:325px;top:631px;width:0;height:0;border-left:3.0px solid transparent;border-right:3.0px solid transparent;border-top:3px solid #000"></div>
<div class="t" style="left:338px;top:622px">3 mm</div>
<div class="a" style="left:405px;top:610px;width:19px;height:20px;background:#fff;"></div>
<div class="a" style="left:406px;top:611px;width:17px;height:1px;background:#7a7a7a;"></div>
<div class="a" style="left:406px;top:611px;width:1px;height:17px;background:#7a7a7a;"></div>
<svg class="a" style="left:410px;top:612px" width="9" height="16" viewBox="0 0 9 16"><rect x="1" y="1" width="7" height="8.5" rx="3.5" fill="#fff" stroke="#111" stroke-width="1.3"/><rect x="1" y="6.5" width="7" height="8.5" rx="3.5" fill="#fff" fill-opacity="0" stroke="#111" stroke-width="1.3"/><rect x="2.8" y="3" width="3.4" height="10" rx="1.7" fill="#333"/><path d="M4.5 4.2V11.8" stroke="#fff" stroke-width="0.9"/><circle cx="4.5" cy="4.5" r="0.7" fill="#fff"/><circle cx="4.5" cy="11.5" r="0.7" fill="#fff"/></svg>
<div class="t" style="right:705px;top:596px"><u>L</u>eft:</div>
<div class="a" style="left:505px;top:593px;width:80px;height:21px;background:#fff;border-top:1px solid #808080;border-left:1px solid #808080;border-right:1px solid #fff;border-bottom:1px solid #fff"><div class="a" style="left:0;top:0;right:0;bottom:0;border-top:1px solid #404040;border-left:1px solid #404040;border-right:1px solid #d4d0c8;border-bottom:1px solid #d4d0c8"></div></div>
<div class="a" style="left:507px;top:595px;width:13px;height:8px;background:#d4d0c8;border-top:1px solid #fff;border-left:1px solid #fff;border-bottom:1px solid #404040"></div>
<div class="a" style="left:507px;top:603px;width:13px;height:9px;background:#d4d0c8;border-top:1px solid #fff;border-left:1px solid #fff;border-bottom:1px solid #404040"></div>
<div class="a" style="left:520px;top:595px;width:2px;height:17px;background:#111;"></div>
<div class="a" style="left:511px;top:598px;width:0;height:0;border-left:3.0px solid transparent;border-right:3.0px solid transparent;border-bottom:3px solid #000"></div>
<div class="a" style="left:511px;top:606px;width:0;height:0;border-left:3.0px solid transparent;border-right:3.0px solid transparent;border-top:3px solid #000"></div>
<div class="t" style="left:524px;top:597px">3 mm</div>
<div class="t" style="right:705px;top:621px"><u>R</u>ight:</div>
<div class="a" style="left:505px;top:618px;width:80px;height:21px;background:#fff;border-top:1px solid #808080;border-left:1px solid #808080;border-right:1px solid #fff;border-bottom:1px solid #fff"><div class="a" style="left:0;top:0;right:0;bottom:0;border-top:1px solid #404040;border-left:1px solid #404040;border-right:1px solid #d4d0c8;border-bottom:1px solid #d4d0c8"></div></div>
<div class="a" style="left:507px;top:620px;width:13px;height:8px;background:#d4d0c8;border-top:1px solid #fff;border-left:1px solid #fff;border-bottom:1px solid #404040"></div>
<div class="a" style="left:507px;top:628px;width:13px;height:9px;background:#d4d0c8;border-top:1px solid #fff;border-left:1px solid #fff;border-bottom:1px solid #404040"></div>
<div class="a" style="left:520px;top:620px;width:2px;height:17px;background:#111;"></div>
<div class="a" style="left:511px;top:623px;width:0;height:0;border-left:3.0px solid transparent;border-right:3.0px solid transparent;border-bottom:3px solid #000"></div>
<div class="a" style="left:511px;top:631px;width:0;height:0;border-left:3.0px solid transparent;border-right:3.0px solid transparent;border-top:3px solid #000"></div>
<div class="t" style="left:524px;top:622px">3 mm</div>
<div class="a" style="left:235px;top:664px;width:405px;height:91px;border-top:1px solid #808080;border-left:1px solid #808080;border-right:1px solid #fff;border-bottom:1px solid #fff"><div class="a" style="left:0;top:0;right:0;bottom:0;border-top:1px solid #fff;border-left:1px solid #fff;border-right:1px solid #808080;border-bottom:1px solid #808080"></div></div>
<div class="t" style="left:243px;top:657px;width:94px;background:#d4d0c8;padding:0 0 0 6px">Bleed and Slug</div>
<div class="t" style="left:296px;top:678px;width:80px;text-align:center">Top</div>
<div class="t" style="left:371px;top:678px;width:80px;text-align:center">Bottom</div>
<div class="t" style="left:437px;top:678px;width:80px;text-align:center">Left</div>
<div class="t" style="left:490px;top:678px;width:80px;text-align:center">Right</div>
<div class="t" style="right:910px;top:703px">Blee<u>d</u>:</div>
<div class="t" style="right:910px;top:728px">Sl<u>u</u>g:</div>
<div class="a" style="left:300px;top:700px;width:72px;height:21px;background:#fff;border-top:1px solid #808080;border-left:1px solid #808080;border-right:1px solid #fff;border-bottom:1px solid #fff"><div class="a" style="left:0;top:0;right:0;bottom:0;border-top:1px solid #404040;border-left:1px solid #404040;border-right:1px solid #d4d0c8;border-bottom:1px solid #d4d0c8"></div></div>
<div class="t" style="left:302px;top:704px">3 mm</div>
<div class="a" style="left:300px;top:725px;width:72px;height:21px;background:#fff;border-top:1px solid #808080;border-left:1px solid #808080;border-right:1px solid #fff;border-bottom:1px solid #fff"><div class="a" style="left:0;top:0;right:0;bottom:0;border-top:1px solid #404040;border-left:1px solid #404040;border-right:1px solid #d4d0c8;border-bottom:1px solid #d4d0c8"></div></div>
<div class="t" style="left:302px;top:729px">0 mm</div>
<div class="a" style="left:377px;top:700px;width:72px;height:21px;background:#fff;border-top:1px solid #808080;border-left:1px solid #808080;border-right:1px solid #fff;border-bottom:1px solid #fff"><div class="a" style="left:0;top:0;right:0;bottom:0;border-top:1px solid #404040;border-left:1px solid #404040;border-right:1px solid #d4d0c8;border-bottom:1px solid #d4d0c8"></div></div>
<div class="t" style="left:379px;top:704px">3 mm</div>
<div class="a" style="left:377px;top:725px;width:72px;height:21px;background:#fff;border-top:1px solid #808080;border-left:1px solid #808080;border-right:1px solid #fff;border-bottom:1px solid #fff"><div class="a" style="left:0;top:0;right:0;bottom:0;border-top:1px solid #404040;border-left:1px solid #404040;border-right:1px solid #d4d0c8;border-bottom:1px solid #d4d0c8"></div></div>
<div class="t" style="left:379px;top:729px">0 mm</div>
<div class="a" style="left:454px;top:700px;width:72px;height:21px;background:#fff;border-top:1px solid #808080;border-left:1px solid #808080;border-right:1px solid #fff;border-bottom:1px solid #fff"><div class="a" style="left:0;top:0;right:0;bottom:0;border-top:1px solid #404040;border-left:1px solid #404040;border-right:1px solid #d4d0c8;border-bottom:1px solid #d4d0c8"></div></div>
<div class="t" style="left:456px;top:704px">3 mm</div>
<div class="a" style="left:454px;top:725px;width:72px;height:21px;background:#fff;border-top:1px solid #808080;border-left:1px solid #808080;border-right:1px solid #fff;border-bottom:1px solid #fff"><div class="a" style="left:0;top:0;right:0;bottom:0;border-top:1px solid #404040;border-left:1px solid #404040;border-right:1px solid #d4d0c8;border-bottom:1px solid #d4d0c8"></div></div>
<div class="t" style="left:456px;top:729px">0 mm</div>
<div class="a" style="left:531px;top:700px;width:72px;height:21px;background:#fff;border-top:1px solid #808080;border-left:1px solid #808080;border-right:1px solid #fff;border-bottom:1px solid #fff"><div class="a" style="left:0;top:0;right:0;bottom:0;border-top:1px solid #404040;border-left:1px solid #404040;border-right:1px solid #d4d0c8;border-bottom:1px solid #d4d0c8"></div></div>
<div class="t" style="left:533px;top:704px">3 mm</div>
<div class="a" style="left:531px;top:725px;width:72px;height:21px;background:#fff;border-top:1px solid #808080;border-left:1px solid #808080;border-right:1px solid #fff;border-bottom:1px solid #fff"><div class="a" style="left:0;top:0;right:0;bottom:0;border-top:1px solid #404040;border-left:1px solid #404040;border-right:1px solid #d4d0c8;border-bottom:1px solid #d4d0c8"></div></div>
<div class="t" style="left:533px;top:729px">0 mm</div>
<div class="a" style="left:609px;top:702px;width:19px;height:19px;background:#fff;"></div>
<div class="a" style="left:610px;top:703px;width:17px;height:1px;background:#7a7a7a;"></div>
<div class="a" style="left:610px;top:703px;width:1px;height:16px;background:#7a7a7a;"></div>
<svg class="a" style="left:614px;top:703px" width="9" height="16" viewBox="0 0 9 16"><rect x="1" y="1" width="7" height="8.5" rx="3.5" fill="#fff" stroke="#111" stroke-width="1.3"/><rect x="1" y="6.5" width="7" height="8.5" rx="3.5" fill="#fff" fill-opacity="0" stroke="#111" stroke-width="1.3"/><rect x="2.8" y="3" width="3.4" height="10" rx="1.7" fill="#333"/><path d="M4.5 4.2V11.8" stroke="#fff" stroke-width="0.9"/><circle cx="4.5" cy="4.5" r="0.7" fill="#fff"/><circle cx="4.5" cy="11.5" r="0.7" fill="#fff"/></svg>
<svg class="a" style="left:609px;top:728px" width="17" height="17" viewBox="0 0 17 17"><g fill="#fff" stroke="#1a1a1a" stroke-width="1.4"><path d="M5.5 7.5V4Q5.5 1 8.5 1Q11.5 1 11.5 4V7.5Z"/><path d="M5.5 9.5V13Q5.5 16 8.5 16Q11.5 16 11.5 13V9.5Z"/></g><path d="M8.5 3V6.5M8.5 10.5V14" stroke="#fff" stroke-width="1"/><path d="M0.5 8.5H3M14 8.5H16.5M1 4L3 5.5M16 4L14 5.5M1 13L3 11.5M16 13L14 11.5" stroke="#333" stroke-width="1"/></svg>
<svg class="a" style="left:576px;top:445px" width="14" height="20" viewBox="0 0 14 20"><path d="M1 1V16L4.5 12.5L7.5 19L10 18L7 11.5H12Z" fill="#fff" stroke="#222" stroke-width="1"/></svg>
<!--/DIALOG-->
</div></body></html>
